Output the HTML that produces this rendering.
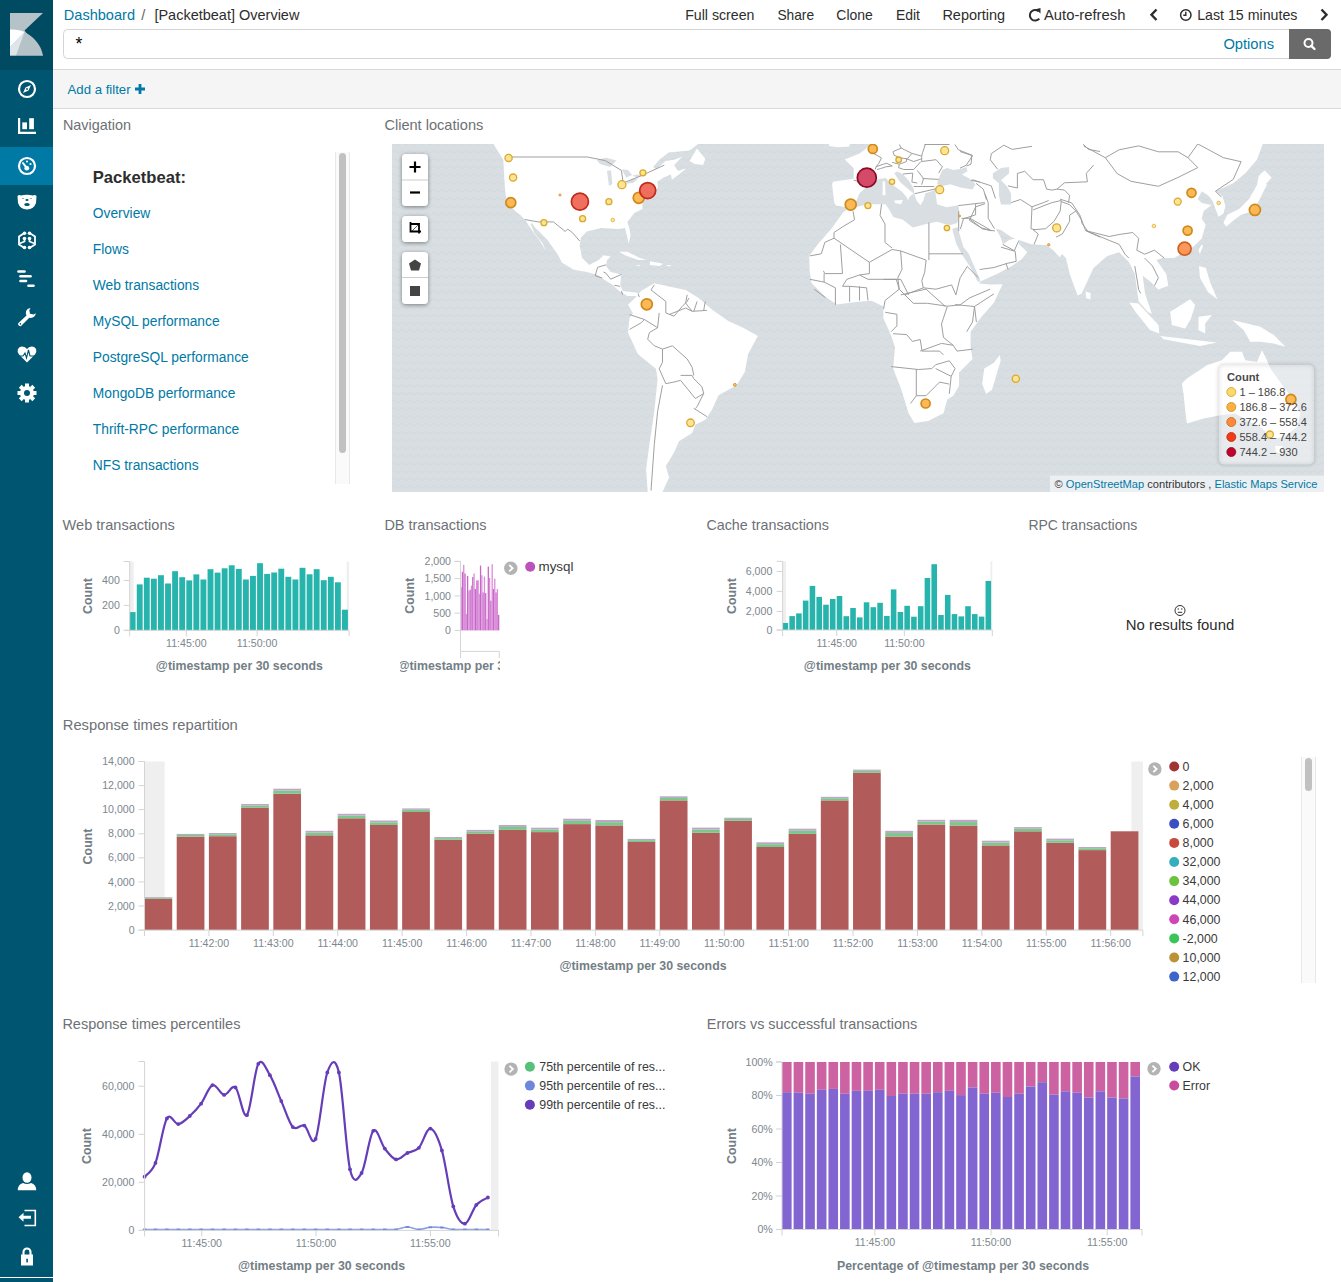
<!DOCTYPE html>
<html><head><meta charset="utf-8"><style>
html,body{margin:0;padding:0;}
body{width:1341px;height:1282px;overflow:hidden;position:relative;background:#fff;font-family:"Liberation Sans", sans-serif;}
#side{position:absolute;left:0;top:0;width:53px;height:1282px;background:#005571;}
#logo{position:absolute;left:0;top:0;width:53px;height:70px;background:#004a62;}
#sel{position:absolute;left:0;top:147px;width:53px;height:38px;background:#0079a5;}
#line{position:absolute;left:0;top:1277px;width:53px;height:1px;background:#fff;}
svg text{font-family:"Liberation Sans", sans-serif;}
</style></head><body>
<div id="side"><div id="logo"></div><div id="sel"></div><div id="line"></div>
<svg style="position:absolute;left:10px;top:13px" width="33" height="43" viewBox="0 0 33 43">
<polygon points="0,0 33,0 14.5,17.5 33,42.5 0,42.5" fill="#b5c3c9"/>
<path d="M0,16.5 C7,16.3 11.5,17.5 14.5,19 L0,34 Z" fill="#fff"/>
<path d="M14.5,19 C24,24 31,32 33,42.5 L6,42.5 Z" fill="#b5c3c9"/>
<path d="M14.5,19 L0,34 L0,42.5 L6,42.5 Z" fill="#dfe6e9"/>
</svg>
<svg style="position:absolute;left:17px;top:79px" width="20" height="20" viewBox="0 0 20 20">
<circle cx="10" cy="10" r="8" fill="none" stroke="#fff" stroke-width="2.2"/>
<path d="M14,6 L11.5,11.5 L6,14 L8.5,8.5 Z" fill="#fff"/><circle cx="10" cy="10" r="0.9" fill="#005571"/></svg>
<svg style="position:absolute;left:18px;top:118px" width="18" height="17" viewBox="0 0 18 17">
<path d="M1.1,0 V14.9 H18" fill="none" stroke="#fff" stroke-width="2.2"/>
<rect x="4.3" y="4.4" width="4.7" height="6.8" fill="#fff"/><rect x="11.2" y="0.2" width="4.7" height="11" fill="#fff"/></svg>
<svg style="position:absolute;left:17px;top:156px" width="20" height="20" viewBox="0 0 20 20">
<circle cx="10" cy="10" r="8" fill="none" stroke="#fff" stroke-width="2.2"/>
<circle cx="9.8" cy="12.2" r="2.4" fill="#fff"/><path d="M6,7 L9.8,12.2" stroke="#fff" stroke-width="2" stroke-linecap="round"/>
<circle cx="10" cy="5.5" r="1.1" fill="#fff"/><circle cx="13.5" cy="8" r="1.1" fill="#fff"/></svg>
<svg style="position:absolute;left:17px;top:194px" width="20" height="16" viewBox="0 0 20 16">
<path d="M0.5,2 Q2,0.5 4,1.5 Q10,0 16,1.5 Q18,0.5 19.5,2 L19,9 Q17,15 10,15.5 Q3,15 1,9 Z" fill="#fff"/>
<ellipse cx="10" cy="6" rx="1.6" ry="1" fill="#005571"/><ellipse cx="10" cy="10.5" rx="2.8" ry="1.5" fill="#005571"/>
<circle cx="6" cy="4.5" r="0.6" fill="#005571"/><circle cx="14" cy="4.5" r="0.6" fill="#005571"/></svg>
<svg style="position:absolute;left:17px;top:231px" width="20" height="20" viewBox="0 0 20 20">
<g fill="none" stroke="#fff" stroke-width="1.8">
<path d="M7.5,2 L2,5.5 V13.5 L7.5,17"/><path d="M12.5,2 L18,5.5 V13.5 L12.5,17"/>
<path d="M7.5,7.2 V10.5 L2.5,12.5"/><path d="M12.5,7.2 V10.5 L17.5,12.5"/></g>
<g fill="#fff"><circle cx="7.5" cy="2.3" r="1.8"/><circle cx="12.5" cy="2.3" r="1.8"/><circle cx="7.5" cy="7.5" r="1.8"/><circle cx="12.5" cy="7.5" r="1.8"/><circle cx="7.5" cy="16.5" r="1.8"/><circle cx="12.5" cy="16.5" r="1.8"/></g></svg>
<svg style="position:absolute;left:16px;top:269px" width="22" height="20" viewBox="0 0 22 20">
<g stroke="#fff" stroke-width="2.6" stroke-linecap="round">
<path d="M2.5,2.5 H8.5"/><path d="M4.5,7.3 H14.5"/><path d="M4.5,12 H10"/><path d="M12.5,16.8 H17.5"/></g></svg>
<svg style="position:absolute;left:17px;top:307px" width="20" height="20" viewBox="0 0 20 20">
<path d="M13.5,1 A5,5 0 1 0 18.8,6.2 L16.5,7.5 L13,6.8 L12.3,3.3 Z" fill="#fff"/>
<path d="M10.5,7.5 L2,15.5 A2,2 0 1 0 4.8,18.3 L13,10" fill="#fff"/><circle cx="3.4" cy="16.9" r="0.8" fill="#005571"/></svg>
<svg style="position:absolute;left:17px;top:346px" width="20" height="18" viewBox="0 0 20 18">
<path d="M10,16.5 L2,8.5 Q0,6 0.8,3.5 Q2,0.5 5.3,0.5 Q8.3,0.5 10,3 Q11.7,0.5 14.7,0.5 Q18,0.5 19.2,3.5 Q20,6 18,8.5 Z" fill="#fff"/>
<path d="M2,10 H6 L8,7 L9.5,12 L11.5,4 L13,10 H18" fill="none" stroke="#005571" stroke-width="1.1"/></svg>
<svg style="position:absolute;left:17px;top:383px" width="20" height="20" viewBox="0 0 20 20">
<g fill="#fff" transform="translate(10,10)">
<circle r="7"/>
<g><rect x="-2" y="-9.5" width="4" height="4"/><rect x="-2" y="5.5" width="4" height="4"/><rect x="-9.5" y="-2" width="4" height="4"/><rect x="5.5" y="-2" width="4" height="4"/></g>
<g transform="rotate(45)"><rect x="-2" y="-9.5" width="4" height="4"/><rect x="-2" y="5.5" width="4" height="4"/><rect x="-9.5" y="-2" width="4" height="4"/><rect x="5.5" y="-2" width="4" height="4"/></g>
</g><circle cx="10" cy="10" r="3" fill="#005571"/></svg>
<svg style="position:absolute;left:17px;top:1172px" width="20" height="19" viewBox="0 0 20 19">
<ellipse cx="10" cy="5.5" rx="4.5" ry="5.3" fill="#fff"/><path d="M0.8,18.2 Q0.8,12.5 6,11 Q10,13 14,11 Q19.2,12.5 19.2,18.2 Z" fill="#fff"/></svg>
<svg style="position:absolute;left:18px;top:1209px" width="19" height="18" viewBox="0 0 19 18">
<path d="M6.5,1.5 H17.3 V16.5 H6.5" fill="none" stroke="#fff" stroke-width="1.6"/>
<path d="M0.5,8.3 L5.5,3.8 V6.8 H13 V9.8 H5.5 V12.8 Z" fill="#fff"/></svg>
<svg style="position:absolute;left:20px;top:1247px" width="14" height="20" viewBox="0 0 14 20">
<path d="M3.5,8 V5 A3.5,3.5 0 0 1 10.5,5 V8" fill="none" stroke="#fff" stroke-width="2.1"/>
<rect x="1" y="7.5" width="12" height="11" fill="#fff"/><rect x="6.3" y="11.7" width="1.6" height="3.7" fill="#005571"/></svg>
</div>
<svg style="position:absolute;left:392px;top:144px" width="932" height="348" viewBox="392 144 932 348">
<defs><pattern id="wv" x="0" y="0" width="8" height="7.8" patternUnits="userSpaceOnUse"><path d="M0,3.5 Q2,1 4,3.5 T8,3.5" fill="none" stroke="#d1d9dc" stroke-width="0.9"/></pattern><filter id="bl"><feGaussianBlur stdDeviation="1.5"/></filter><filter id="sh" x="-30%" y="-30%" width="160%" height="160%"><feGaussianBlur in="SourceAlpha" stdDeviation="2"/><feOffset dy="1"/><feComponentTransfer><feFuncA type="linear" slope="0.45"/></feComponentTransfer><feMerge><feMergeNode/><feMergeNode in="SourceGraphic"/></feMerge></filter></defs>
<rect x="392" y="144" width="932" height="348" fill="#d8dee2"/>
<rect x="392" y="144" width="932" height="348" fill="url(#wv)"/>
<g fill="#fff"><path d="M493.4,143.9 L503.3,159.7 L504.2,175.8 L505.1,190.1 L506.8,202.6 L515.8,211.6 L520.0,214.8 L524.8,219.5 L531.9,230.3 L539.1,239.8 L545.7,250.6 L542.7,243.4 L534.3,232.7 L530.7,224.3 L531.9,223.1 L535.5,227.9 L547.4,239.8 L558.2,255.3 L561.8,262.5 L573.7,269.7 L586.8,272.0 L596.4,274.4 L603.5,279.2 L613.1,285.2 L619.0,291.1 L627.4,295.9 L636.9,295.9 L639.3,293.0 L633.4,292.3 L622.6,291.1 L620.2,284.0 L621.4,274.4 L610.7,272.0 L605.9,266.1 L607.1,260.1 L610.7,256.5 L603.5,255.3 L598.8,260.1 L589.2,264.9 L582.0,257.7 L579.7,245.8 L580.9,237.4 L586.8,231.5 L601.1,227.9 L619.0,229.1 L625.0,227.9 L627.4,237.4 L628.6,243.4 L630.5,236.0 L629.8,230.0 L627.4,222.0 L634.3,213.1 L642.3,209.0 L642.6,198.5 L646.5,191.0 L653.1,192.2 L657.9,187.6 L657.3,181.8 L663.5,177.6 L670.8,174.5 L671.9,179.7 L680.2,173.4 L686.5,168.2 L678.1,171.0 L674.0,165.1 L682.3,156.7 L674.0,159.8 L665.6,160.9 L656.2,169.2 L653.1,167.1 L659.3,159.8 L668.7,152.5 L689.6,150.4 L698.0,144.0 Z"/><path d="M636.9,295.9 L641.0,291.0 L654.3,283.3 L669.1,286.6 L685.6,289.9 L698.7,298.1 L711.9,309.6 L728.3,321.1 L743.1,327.7 L757.9,335.9 L748.1,354.0 L744.8,372.1 L736.6,385.3 L718.5,395.2 L711.9,410.0 L705.3,419.8 L695.4,424.8 L692.1,433.0 L679.0,441.2 L674.0,452.8 L665.8,465.9 L669.1,477.4 L662.5,492.0 L647.7,492.0 L646.1,469.2 L649.4,444.5 L654.3,411.6 L657.6,378.7 L655.9,368.8 L637.8,354.0 L628.0,332.6 L629.6,317.8 L632.9,312.9 L628.0,304.7 Z"/><path d="M870.1,144.0 L1262.8,144.0 L1256.9,159.7 L1245.0,173.5 L1233.2,183.3 L1215.5,191.2 L1222.4,196.1 L1225.4,205.9 L1223.4,213.8 L1218.5,216.8 L1215.5,208.9 L1212.6,201.0 L1209.6,197.1 L1207.6,195.1 L1201.7,191.2 L1197.8,199.1 L1201.7,203.0 L1211.6,205.0 L1203.7,210.9 L1201.7,218.7 L1205.7,224.6 L1201.7,238.4 L1193.9,246.3 L1174.2,258.1 L1162.4,258.1 L1156.5,260.1 L1166.3,273.9 L1168.3,285.7 L1158.4,289.6 L1150.6,281.7 L1142.7,275.8 L1145.0,293.5 L1152.0,314.0 L1148.0,312.0 L1138.7,301.4 L1134.8,273.9 L1128.9,262.0 L1119.1,252.2 L1107.2,256.1 L1093.5,268.0 L1081.7,293.5 L1077.7,295.5 L1070.0,275.0 L1065.9,258.1 L1062.0,254.0 L1059.8,257.3 L1053.0,250.0 L1046.6,245.2 L1031.4,244.2 L1019.2,240.1 L1011.1,237.1 L1001.0,230.0 L995.9,229.0 L1000.0,236.0 L1003.0,244.2 L1009.1,240.1 L1017.2,238.1 L1019.2,244.2 L1027.3,252.3 L1021.3,259.4 L1011.1,266.5 L995.9,274.6 L980.7,281.2 L979.0,283.5 L990.0,284.5 L1002.6,284.2 L993.9,302.7 L980.3,318.2 L970.6,331.7 L970.6,347.2 L972.5,358.9 L959.0,372.4 L959.0,386.0 L953.2,395.7 L947.3,399.6 L943.5,413.2 L928.0,420.9 L914.4,422.9 L908.6,413.2 L900.8,388.0 L893.1,368.6 L895.0,347.2 L891.1,335.6 L883.4,318.2 L883.4,306.5 L871.7,300.7 L858.2,301.7 L836.8,304.6 L825.2,296.8 L811.6,283.3 L809.7,271.6 L809.2,255.9 L817.6,244.4 L832.2,227.7 L842.6,213.1 L849.2,207.5 L835.8,205.6 L834.3,202.6 L832.1,184.7 L832.8,181.8 L853.7,178.8 L853.7,168.3 L844.7,159.4 L859.7,153.4 L865.6,148.9 Z"/><path d="M829.0,144.0 L850.0,144.0 L849.2,146.5 L838.0,147.2 L829.0,146.0 Z"/><path d="M619.0,251.8 L627.4,251.8 L639.3,257.7 L646.5,260.1 L638.1,260.1 L625.0,255.3 Z"/><path d="M650.0,261.3 L663.2,263.7 L659.6,266.1 L650.0,264.9 Z"/><path d="M635.7,264.9 L640.5,265.2 L639.0,266.3 Z"/><path d="M666.8,264.9 L671.5,265.2 L670.0,266.3 L667.0,266.1 Z"/><path d="M882.7,181.0 L885.0,181.5 L885.6,195.6 L882.5,195.0 Z"/><path d="M894.3,200.4 L903.0,200.0 L901.0,204.3 L895.0,203.0 Z"/><path d="M1085.6,291.6 L1090.5,293.0 L1090.5,299.4 L1086.0,298.0 Z"/><path d="M999.7,355.0 L1000.7,360.8 L991.9,389.9 L986.1,393.8 L982.2,384.1 L984.2,368.6 L993.9,362.8 Z"/><path d="M1264.7,174.4 L1266.7,185.3 L1258.8,201.0 L1252.9,210.9 L1241.1,214.8 L1233.2,220.7 L1226.3,226.6 L1223.4,222.7 L1227.3,214.8 L1239.1,208.9 L1249.0,199.1 L1256.9,185.3 L1258.8,175.4 Z"/><path d="M1259.8,174.4 L1264.7,170.5 L1271.6,177.4 L1266.7,183.3 L1260.8,180.3 Z"/><path d="M689.6,160.9 L696.9,148.4 L705.3,158.8 L703.2,165.1 L694.8,164.0 Z"/><path d="M1201.7,244.3 L1203.0,246.0 L1199.8,254.2 L1198.5,250.0 Z"/><path d="M1199.0,266.0 L1206.0,268.0 L1210.0,282.0 L1217.5,299.4 L1208.0,292.0 L1200.0,278.0 Z"/><path d="M1129.2,302.5 L1138.4,303.4 L1158.5,325.1 L1159.3,333.4 L1150.1,330.1 L1136.7,313.4 Z"/><path d="M1160.1,336.0 L1216.9,342.6 L1200.2,346.0 L1163.5,339.3 Z"/><path d="M1170.2,311.7 L1190.2,299.2 L1195.2,305.1 L1191.0,318.4 L1185.2,328.4 L1171.8,325.1 Z"/><path d="M1198.5,316.7 L1211.9,315.1 L1205.2,323.4 L1205.2,333.4 L1198.5,330.1 Z"/><path d="M1232.0,320.1 L1247.0,323.4 L1260.3,326.8 L1273.7,335.1 L1285.4,346.8 L1273.7,343.5 L1260.3,341.8 L1250.3,341.8 L1243.6,330.1 Z"/><path d="M1181.8,383.6 L1186.9,378.5 L1206.9,365.2 L1221.9,360.2 L1230.3,351.8 L1242.0,351.8 L1245.3,360.2 L1257.0,361.8 L1262.0,350.2 L1267.0,360.2 L1270.4,368.5 L1283.7,386.9 L1293.8,400.3 L1300.4,413.6 L1297.1,427.0 L1283.7,437.0 L1273.7,438.7 L1260.3,427.0 L1247.0,420.3 L1235.3,413.6 L1220.3,415.3 L1203.6,418.6 L1186.9,423.6 L1185.2,410.3 L1183.5,393.6 Z"/><path d="M1275.0,446.0 L1283.0,446.0 L1280.0,453.0 L1276.0,452.0 Z"/></g>
<g fill="#d8dee2"><path d="M852.6,208.2 L856.5,200.4 L859.4,193.6 L863.3,189.7 L872.0,182.0 L878.8,179.1 L885.6,178.1 L894.3,185.9 L902.0,191.7 L906.9,197.5 L907.9,200.4 L909.8,196.5 L913.7,193.6 L907.9,188.8 L900.1,182.0 L894.3,173.3 L897.0,171.5 L903.0,174.2 L909.8,182.0 L913.7,188.8 L914.6,194.6 L916.6,200.4 L920.5,205.3 L923.4,200.4 L925.3,193.6 L933.1,190.7 L935.0,188.8 L936.0,196.5 L937.0,204.3 L946.6,207.2 L958.3,205.3 L959.4,212.7 L957.4,222.9 L950.3,224.9 L946.6,224.6 L937.0,221.7 L927.3,223.7 L912.7,227.6 L903.0,219.8 L893.3,216.9 L889.4,210.1 L885.6,204.3 L878.8,204.3 L869.1,204.3 L859.4,206.2 Z"/><path d="M938.1,180.3 L942.2,170.1 L947.2,168.1 L953.3,170.1 L960.4,169.1 L966.5,167.1 L967.5,171.2 L962.0,174.5 L970.6,179.3 L975.6,184.3 L972.6,189.4 L960.4,187.4 L950.3,184.3 L940.1,186.4 L937.1,183.3 Z"/><path d="M992.9,173.2 L1001.0,168.1 L1009.1,167.1 L1009.1,173.2 L1001.0,180.3 L1007.1,186.4 L1011.1,193.5 L1011.1,204.6 L1001.0,204.6 L998.9,195.5 L998.9,183.3 L992.9,178.3 Z"/><path d="M952.3,229.0 L957.4,226.9 L963.5,247.2 L968.5,253.3 L975.6,269.5 L980.7,281.2 L977.7,281.7 L970.6,267.5 L962.4,255.3 L956.4,244.2 L953.3,233.0 Z"/><path d="M995.9,229.0 L995.9,229.5 Z"/><path d="M596.7,160.0 L606.0,157.7 L616.5,160.5 L610.0,167.1 L600.0,164.0 Z"/><path d="M607.0,171.0 L611.0,170.3 L612.4,184.0 L609.0,186.0 Z"/><path d="M621.8,169.2 L628.0,170.0 L632.2,175.0 L626.0,177.6 Z"/><path d="M624.9,183.8 L632.0,179.0 L638.5,178.6 L633.0,183.0 Z"/><path d="M632.2,175.5 L638.0,174.5 L642.6,175.5 L637.0,177.6 Z"/></g>
<g fill="#fff"><path d="M882.7,181.0 L885.0,181.5 L885.6,195.6 L882.5,195.0 Z"/><path d="M894.3,200.4 L903.0,200.0 L901.0,204.3 L895.0,203.0 Z"/></g>
<g fill="none" stroke="#9a9a9a" stroke-width="0.95"><path d="M853.1,211.3 L854.5,219.8 L842.5,226.8 L834.0,232.5 L834.0,238.2"/><path d="M834.0,238.2 L824.8,242.4 L821.3,253.8 L809.9,255.9"/><path d="M834.0,238.2 L869.4,262.3"/><path d="M840.4,244.5 L842.5,273.6 L824.8,273.6 L823.4,270.8"/><path d="M881.5,204.2 L880.1,215.5 L885.0,224.0 L885.0,242.4 L892.1,248.1"/><path d="M869.4,262.3 L892.1,249.5"/><path d="M892.1,249.5 L900.6,250.9 L926.1,260.1"/><path d="M928.9,222.6 L928.9,260.1"/><path d="M928.9,253.8 L962.9,253.8"/><path d="M869.4,262.3 L869.4,273.6 L859.5,275.0 L846.8,279.3 L842.5,286.3"/><path d="M900.6,250.9 L902.0,269.3 L897.8,277.8"/><path d="M859.5,275.0 L868.0,279.3 L896.3,279.3"/><path d="M926.1,260.1 L924.7,272.2 L921.8,280.7 L923.3,287.8"/><path d="M897.8,277.8 L899.2,289.2 L904.8,294.8 L923.3,287.8"/><path d="M923.3,287.8 L936.0,289.2 L951.6,284.9 L955.9,294.8"/><path d="M967.2,266.5 L960.1,277.8 L955.9,294.8"/><path d="M967.2,266.5 L978.5,277.8"/><path d="M896.3,279.3 L899.2,289.2 L885.0,300.5 L883.6,309.0"/><path d="M824.1,273.6 L824.1,282.1 L835.4,287.8 L835.4,304.8"/><path d="M849.6,286.3 L849.6,301.9"/><path d="M859.5,286.3 L859.5,300.5"/><path d="M842.5,286.3 L849.6,286.3 L866.6,287.8 L868.0,300.5"/><path d="M809.9,279.3 L824.1,282.1"/><path d="M814.2,289.2 L825.5,297.7"/><path d="M904.8,294.8 L913.3,303.3 L927.5,303.3 L947.4,306.2"/><path d="M947.4,306.2 L960.1,304.8 L970.0,297.7 L990.0,289.2"/><path d="M961.5,218.3 L970.0,218.3 L989.9,229.7"/><path d="M958.7,211.3 L958.7,231.1"/><path d="M885.3,312.3 L896.9,314.3 L896.9,325.9 L891.1,331.7"/><path d="M893.1,333.7 L906.6,334.6 L912.4,341.4 L920.2,339.5 L922.1,351.1 L939.6,351.1 L943.5,355.0"/><path d="M891.1,366.6 L918.3,369.5 L931.8,368.6"/><path d="M916.3,369.5 L916.3,395.7 L910.5,403.5"/><path d="M916.3,395.7 L926.0,395.7 L939.6,382.1 L949.3,384.1"/><path d="M920.2,351.1 L941.5,343.4 L953.2,345.3 L957.0,351.1 L972.5,349.2"/><path d="M974.5,306.5 L972.5,322.0 L966.7,331.7"/><path d="M947.3,306.5 L941.5,324.0 L943.5,337.5 L953.2,345.3"/><path d="M935.7,368.6 L951.2,376.3 L949.3,393.8"/><path d="M931.8,368.6 L935.7,364.7 L949.3,360.8 L955.1,368.6 L951.2,376.3"/><path d="M993.9,293.9 L980.3,302.7 L974.5,306.5"/><path d="M974.5,306.5 L976.4,322.0"/><path d="M955.1,304.6 L974.5,306.5"/><path d="M900.8,294.9 L926.0,289.1 L945.4,306.5"/><path d="M883.4,279.4 L900.8,279.4 L908.6,294.9"/><path d="M1083.6,145.9 L1105.3,157.7 L1119.1,149.8 L1138.7,145.9 L1158.4,151.8 L1178.1,151.8 L1188.0,157.7 L1197.8,143.9"/><path d="M1105.3,157.7 L1117.1,173.5 L1130.9,181.3 L1158.4,186.3 L1178.1,177.4 L1197.8,167.6 L1188.0,157.7"/><path d="M1197.8,143.9 L1223.4,157.7 L1241.1,161.7 L1233.2,179.4 L1215.5,191.2"/><path d="M1215.5,191.2 L1221.4,197.1"/><path d="M1060.0,199.1 L1071.8,203.0 L1079.7,214.8 L1085.6,230.6 L1109.2,236.5 L1119.1,234.5 L1132.8,232.5 L1138.7,238.4 L1136.8,250.2"/><path d="M1085.6,230.6 L1109.2,240.4 L1119.1,244.3"/><path d="M1119.1,244.3 L1125.0,254.2 L1128.9,258.1"/><path d="M1136.8,250.2 L1144.6,254.2 L1154.5,250.2 L1164.3,258.1"/><path d="M1134.8,266.0 L1138.7,289.6 L1140.7,293.5"/><path d="M1144.6,258.1 L1152.5,266.0 L1158.4,277.8 L1154.5,285.7"/><path d="M958.4,205.6 L975.6,203.6 L984.8,202.6"/><path d="M969.5,218.8 L982.7,229.0 L994.9,231.0"/><path d="M960.4,229.0 L963.5,218.8 L975.6,214.8 L975.6,203.6"/><path d="M1001.0,247.2 L1015.2,251.3 L1016.2,261.4 L1007.1,263.4 L993.9,267.5 L979.7,269.5"/><path d="M1006.0,263.4 L1008.1,269.5"/><path d="M654.3,284.9 L651.0,289.9 L665.8,301.4 L665.8,312.9 L674.0,316.2 L682.3,306.3 L687.2,301.4 L688.8,298.1"/><path d="M687.2,294.8 L685.6,303.0 L692.1,311.3"/><path d="M697.1,301.4 L693.8,311.3"/><path d="M705.3,301.4 L703.7,310.4"/><path d="M669.1,314.6 L685.6,308.0 L692.1,311.3 L706.9,310.4"/><path d="M629.6,314.6 L644.4,319.5 L657.6,327.7 L659.2,312.9"/><path d="M629.6,329.4 L641.1,322.8 L644.4,319.5"/><path d="M657.6,327.7 L649.4,332.6 L647.7,339.2 L654.3,345.8 L662.5,349.1 L672.4,345.8"/><path d="M672.4,345.8 L687.2,359.0 L692.1,367.2 L693.8,375.4"/><path d="M662.5,349.1 L662.5,362.3 L659.2,368.8"/><path d="M659.2,368.8 L665.8,383.7 L674.0,382.0 L680.6,380.4"/><path d="M680.6,375.4 L692.1,375.4 L693.8,378.7"/><path d="M680.6,380.4 L695.4,398.5 L703.7,393.5 L702.0,386.9 L693.8,378.7"/><path d="M703.7,393.5 L697.1,406.7 L695.4,408.3"/><path d="M693.8,408.3 L706.9,416.6"/><path d="M662.5,385.3 L657.6,411.6 L654.3,444.5 L651.0,490.6"/><path d="M508.6,157.0 L587.4,157.0 L605.3,160.6 L621.4,170.4 L623.2,183.0 L641.1,175.8 L664.3,165.1"/><path d="M853.7,180.3 L862.6,181.8"/><path d="M914.8,193.7 L934.2,189.2 L940.2,186.2"/><path d="M976.0,183.3 L983.4,189.2"/><path d="M983.4,189.2 L986.4,199.7"/><path d="M960.0,151.5 L972.5,155.7 L966.3,165.1 L960.0,168.2"/><path d="M991.3,153.6 L1003.8,145.2 L1012.2,149.4 L1032.0,146.3"/><path d="M991.3,153.6 L990.3,159.8 L997.6,169.2"/><path d="M1008.0,185.9 L1017.4,188.0 L1017.4,173.4 L1024.7,171.3 L1033.1,179.7 L1043.5,179.7 L1046.6,189.1 L1051.9,190.1"/><path d="M1083.2,144.2 L1088.4,149.4 L1100.0,151.5"/><path d="M1093.6,165.1 L1086.3,173.4 L1087.4,181.8 L1064.4,182.8 L1057.1,189.1"/><path d="M1011.2,202.6 L1020.5,199.5 L1032.0,206.8 L1043.5,202.6 L1048.7,200.5"/><path d="M1032.0,206.8 L1031.0,228.7 L1035.2,229.8"/><path d="M1033.1,209.9 L1051.9,202.6 L1061.3,200.5 L1060.2,211.0 L1054.0,221.4 L1045.6,228.7 L1033.1,229.8"/><path d="M1061.3,201.6 L1069.6,204.7 L1075.9,211.0 L1069.6,215.2 L1069.6,221.4 L1062.3,234.0 L1056.0,237.1"/><path d="M1075.9,211.0 L1081.1,219.3 L1082.1,223.5 L1088.4,231.9 L1100.0,237.1"/><path d="M1051.9,190.1 L1057.1,189.1 L1064.4,190.1 L1069.6,195.3 L1068.6,202.6"/><path d="M985.1,194.3 L988.2,202.6 L988.2,218.3 L994.5,228.7"/><path d="M969.4,220.4 L975.7,206.8 L985.1,203.7"/><path d="M969.4,220.4 L980.9,227.7 L991.3,230.8"/><path d="M972.5,179.7 L991.3,185.9 L995.5,198.5"/><path d="M1033.1,229.8 L1038.3,234.0 L1034.1,244.4"/><path d="M1002.8,244.4 L1014.3,250.7 L1018.5,241.3"/><path d="M873.4,153.4 L881.5,157.9 L878.8,163.3 L876.1,166.8 L875.2,169.5"/><path d="M876.1,166.8 L883.3,164.2 L886.8,163.3 L892.2,166.0 L886.0,166.8 L880.6,168.6 L877.0,169.5"/><path d="M899.4,144.5 L901.2,148.1 L893.1,151.6 L894.0,155.2 L900.3,157.9 L907.4,158.8 L911.9,153.4 L904.7,149.8 L901.2,148.1"/><path d="M892.2,162.4 L899.4,164.2 L906.5,161.5 L906.5,158.8"/><path d="M899.4,164.2 L898.5,167.7 L903.8,169.5"/><path d="M911.9,153.4 L921.7,156.1 L922.6,152.5 L925.3,144.5"/><path d="M906.5,158.8 L913.7,161.5 L921.7,158.8"/><path d="M903.8,169.5 L913.7,169.5 L920.9,161.5"/><path d="M921.7,156.1 L921.7,161.5 L936.1,159.7 L942.3,166.8 L938.7,173.1"/><path d="M922.6,178.5 L938.7,179.4"/><path d="M903.0,174.0 L912.8,173.1 L911.9,182.1 L917.3,183.0"/><path d="M917.3,170.4 L923.5,178.5 L921.7,184.7"/><path d="M913.7,186.5 L922.6,186.5 L934.3,186.5"/><path d="M924.4,144.5 L949.5,144.5"/><path d="M954.9,144.5 L958.4,149.8 L971.9,155.2 L971.0,164.2 L966.5,166.0"/><path d="M971.0,180.3 L980.0,182.1"/><path d="M524.8,219.5 L537.9,221.9 L553.4,221.9 L565.3,231.5 L567.7,229.1 L572.5,232.7 L579.7,241.0"/><path d="M605.9,264.9 L597.6,267.3 L595.2,275.6 L602.3,278.0"/><path d="M603.5,272.0 L605.9,273.2 L610.7,279.2 L621.4,274.4"/><path d="M614.3,285.2 L620.2,286.4"/><path d="M621.4,291.1 L622.6,294.7"/><path d="M638.1,293.5 L639.3,297.1"/></g>
<rect x="1219" y="365" width="95" height="99.5" rx="5" fill="none" stroke="#000" stroke-opacity="0.12" stroke-width="3" filter="url(#bl)"/>
<rect x="1219" y="365" width="95" height="99.5" rx="5" fill="#fff" fill-opacity="0.4"/>
<circle cx="508.6" cy="157.9" r="3.6" fill="#fde38a" fill-opacity="0.92" stroke="#d9a82e" stroke-width="1.3"/>
<circle cx="513.1" cy="177.6" r="3.6" fill="#fde38a" fill-opacity="0.92" stroke="#d9a82e" stroke-width="1.3"/>
<circle cx="510.8" cy="202.6" r="5" fill="#fdb347" fill-opacity="0.92" stroke="#cf8a1c" stroke-width="1.7"/>
<circle cx="560" cy="195" r="1.1" fill="#fdb347" fill-opacity="0.92" stroke="#cf8a1c" stroke-width="0.7"/>
<circle cx="579.9" cy="201.7" r="8.5" fill="#f06350" fill-opacity="0.92" stroke="#c02a1a" stroke-width="1.7"/>
<circle cx="608.9" cy="201.7" r="3" fill="#fde38a" fill-opacity="0.92" stroke="#d9a82e" stroke-width="1.3"/>
<circle cx="582.6" cy="218.7" r="3" fill="#fde38a" fill-opacity="0.92" stroke="#d9a82e" stroke-width="1.3"/>
<circle cx="612.8" cy="220" r="1.8" fill="#fde38a" fill-opacity="0.92" stroke="#d9a82e" stroke-width="0.7"/>
<circle cx="543.9" cy="222.7" r="3" fill="#fde38a" fill-opacity="0.92" stroke="#d9a82e" stroke-width="1.3"/>
<circle cx="621.9" cy="184.7" r="4" fill="#fde38a" fill-opacity="0.92" stroke="#d9a82e" stroke-width="1.3"/>
<circle cx="642.9" cy="172.8" r="3" fill="#fde38a" fill-opacity="0.92" stroke="#d9a82e" stroke-width="1.3"/>
<circle cx="638.7" cy="197.8" r="5.5" fill="#fdb347" fill-opacity="0.92" stroke="#cf8a1c" stroke-width="1.7"/>
<circle cx="647.7" cy="190.6" r="8" fill="#f06350" fill-opacity="0.92" stroke="#c02a1a" stroke-width="1.7"/>
<circle cx="646.8" cy="304.3" r="5.5" fill="#fdb347" fill-opacity="0.92" stroke="#cf8a1c" stroke-width="1.7"/>
<circle cx="734.9" cy="384.8" r="1.5" fill="#fdb347" fill-opacity="0.92" stroke="#cf8a1c" stroke-width="0.7"/>
<circle cx="690.5" cy="422.8" r="3.8" fill="#fde38a" fill-opacity="0.92" stroke="#d9a82e" stroke-width="1.3"/>
<circle cx="872.8" cy="148.9" r="4.5" fill="#fdb347" fill-opacity="0.92" stroke="#cf8a1c" stroke-width="1.7"/>
<circle cx="898.7" cy="159.8" r="2.8" fill="#fde38a" fill-opacity="0.92" stroke="#d9a82e" stroke-width="1.3"/>
<circle cx="892" cy="181.8" r="2.6" fill="#fde38a" fill-opacity="0.92" stroke="#d9a82e" stroke-width="1.3"/>
<circle cx="944.7" cy="150.7" r="4" fill="#fde38a" fill-opacity="0.92" stroke="#d9a82e" stroke-width="1.3"/>
<circle cx="939.7" cy="189.7" r="4" fill="#fde38a" fill-opacity="0.92" stroke="#d9a82e" stroke-width="1.3"/>
<circle cx="850.7" cy="204.6" r="5.5" fill="#fdb347" fill-opacity="0.92" stroke="#cf8a1c" stroke-width="1.7"/>
<circle cx="867.9" cy="205.6" r="3" fill="#fde38a" fill-opacity="0.92" stroke="#d9a82e" stroke-width="1.3"/>
<circle cx="946.9" cy="228" r="2.7" fill="#fde38a" fill-opacity="0.92" stroke="#d9a82e" stroke-width="1.3"/>
<circle cx="959.6" cy="216" r="1" fill="#fdb347" fill-opacity="0.92" stroke="#cf8a1c" stroke-width="0.7"/>
<circle cx="925.6" cy="403.5" r="4.5" fill="#fdb347" fill-opacity="0.92" stroke="#cf8a1c" stroke-width="1.7"/>
<circle cx="1015.8" cy="378.7" r="3.6" fill="#fde38a" fill-opacity="0.92" stroke="#d9a82e" stroke-width="1.3"/>
<circle cx="1191.5" cy="192.8" r="4.5" fill="#fdb347" fill-opacity="0.92" stroke="#cf8a1c" stroke-width="1.7"/>
<circle cx="1177.7" cy="201.6" r="3.5" fill="#fde38a" fill-opacity="0.92" stroke="#d9a82e" stroke-width="1.3"/>
<circle cx="1153.9" cy="226" r="1.8" fill="#fde38a" fill-opacity="0.92" stroke="#d9a82e" stroke-width="0.7"/>
<circle cx="1187.6" cy="230.6" r="4.5" fill="#fdb347" fill-opacity="0.92" stroke="#cf8a1c" stroke-width="1.7"/>
<circle cx="1184.6" cy="248.7" r="6.5" fill="#fd8f4f" fill-opacity="0.92" stroke="#d0621f" stroke-width="1.7"/>
<circle cx="1218.7" cy="203" r="1.8" fill="#fde38a" fill-opacity="0.92" stroke="#d9a82e" stroke-width="0.7"/>
<circle cx="1254.9" cy="209.9" r="5.5" fill="#fdb347" fill-opacity="0.92" stroke="#cf8a1c" stroke-width="1.7"/>
<circle cx="1056.7" cy="227.9" r="4" fill="#fde38a" fill-opacity="0.92" stroke="#d9a82e" stroke-width="1.3"/>
<circle cx="1048.7" cy="244.8" r="1.2" fill="#fdb347" fill-opacity="0.92" stroke="#cf8a1c" stroke-width="0.7"/>
<circle cx="1290.9" cy="399.4" r="5" fill="#fdb347" fill-opacity="0.92" stroke="#cf8a1c" stroke-width="1.7"/>
<circle cx="1269.9" cy="434.5" r="3.5" fill="#fde38a" fill-opacity="0.92" stroke="#d9a82e" stroke-width="1.3"/>
<circle cx="866.8" cy="177.7" r="9.5" fill="#d23b5c" fill-opacity="0.92" stroke="#8c0b22" stroke-width="1.7"/>
<g filter="url(#sh)"><rect x="402" y="154" width="26" height="52" rx="4" fill="#fff"/><rect x="402" y="216" width="26" height="26" rx="4" fill="#fff"/><rect x="402" y="252" width="26" height="52" rx="4" fill="#fff"/></g>
<path d="M402,180 H428 M402,277.5 H428" stroke="#ccc" stroke-width="1"/>
<path d="M415,161.5 V172.5 M409.5,167 H420.5" stroke="#000" stroke-width="2.2"/>
<path d="M410,192.5 H420" stroke="#000" stroke-width="2.2"/>
<path d="M410.5,224 H419 V233.5 M410.5,222 V231.5 H421" fill="none" stroke="#000" stroke-width="1.8"/><path d="M412,231 L420,223" stroke="#000" stroke-width="0.6"/>
<path d="M415,259.5 L421,263.5 L419,270.5 L411,270.5 L409,263.5 Z" fill="#444"/>
<rect x="410" y="286" width="10" height="10" fill="#444"/>
<text x="1227" y="381" font-size="11.2" font-weight="bold" fill="#4a4a4a">Count</text>
<circle cx="1231.3" cy="392" r="4.5" fill="#fdd86a" stroke="#cf9f2a" stroke-width="0.8"/>
<text x="1239.5" y="396" font-size="11" fill="#444">1 – 186.8</text>
<circle cx="1231.3" cy="407" r="4.5" fill="#fdb13e" stroke="#c98a1f" stroke-width="0.8"/>
<text x="1239.5" y="411" font-size="11" fill="#444">186.8 – 372.6</text>
<circle cx="1231.3" cy="422" r="4.5" fill="#fd8a3a" stroke="#c9621c" stroke-width="0.8"/>
<text x="1239.5" y="426" font-size="11" fill="#444">372.6 – 558.4</text>
<circle cx="1231.3" cy="437" r="4.5" fill="#f03c17" stroke="#c02a10" stroke-width="0.8"/>
<text x="1239.5" y="441" font-size="11" fill="#444">558.4 – 744.2</text>
<circle cx="1231.3" cy="452" r="4.5" fill="#c0052b" stroke="#8f0a20" stroke-width="0.8"/>
<text x="1239.5" y="456" font-size="11" fill="#444">744.2 – 930</text>
<rect x="1050" y="475.6" width="274" height="16.4" fill="#fff" fill-opacity="0.55"/>
<text x="1054.6" y="487.6" font-size="11.1" fill="#333">© <tspan fill="#0079a5">OpenStreetMap</tspan> contributors , <tspan fill="#0079a5">Elastic Maps Service</tspan></text>
</svg>
<svg style="position:absolute;left:0;top:0" width="1341" height="1282" viewBox="0 0 1341 1282">
<text x="63.8" y="20.2" font-size="14.6" fill="#0079a5" text-anchor="start" textLength="71.2" lengthAdjust="spacingAndGlyphs">Dashboard</text>
<text x="141.2" y="20.2" font-size="14.6" fill="#666" text-anchor="start" >/</text>
<text x="154.4" y="20.2" font-size="14.6" fill="#2d2d2d" text-anchor="start" textLength="145" lengthAdjust="spacingAndGlyphs">[Packetbeat] Overview</text>
<text x="685.2" y="20.3" font-size="14.1" fill="#2d2d2d" text-anchor="start" textLength="69.3" lengthAdjust="spacingAndGlyphs">Full screen</text>
<text x="777.4" y="20.3" font-size="14.1" fill="#2d2d2d" text-anchor="start" textLength="36.7" lengthAdjust="spacingAndGlyphs">Share</text>
<text x="836.3" y="20.3" font-size="14.1" fill="#2d2d2d" text-anchor="start" textLength="36.5" lengthAdjust="spacingAndGlyphs">Clone</text>
<text x="896" y="20.3" font-size="14.1" fill="#2d2d2d" text-anchor="start" textLength="24" lengthAdjust="spacingAndGlyphs">Edit</text>
<text x="942.4" y="20.3" font-size="14.1" fill="#2d2d2d" text-anchor="start" textLength="62.8" lengthAdjust="spacingAndGlyphs">Reporting</text>
<text x="1044" y="20.3" font-size="14.1" fill="#2d2d2d" text-anchor="start" textLength="81.4" lengthAdjust="spacingAndGlyphs">Auto-refresh</text>
<text x="1197.2" y="20.3" font-size="14.1" fill="#2d2d2d" text-anchor="start" textLength="100.2" lengthAdjust="spacingAndGlyphs">Last 15 minutes</text>
<path d="M1038.5,11.2 A5.3,5.3 0 1 0 1039.3,18.6" fill="none" stroke="#2d2d2d" stroke-width="2"/><path d="M1035.5,9.2 L1040.5,8 L1040.5,13.5 Z" fill="#2d2d2d"/>
<path d="M1156.5,9.5 L1151.5,14.8 L1156.5,20" fill="none" stroke="#2d2d2d" stroke-width="2.4"/>
<path d="M1321.5,9.5 L1326.5,14.8 L1321.5,20" fill="none" stroke="#2d2d2d" stroke-width="2.4"/>
<circle cx="1185.8" cy="15" r="5.2" fill="none" stroke="#2d2d2d" stroke-width="1.5"/><path d="M1185.8,11.8 V15.3 H1183.3" fill="none" stroke="#2d2d2d" stroke-width="1.4"/>
<path d="M1289,29.5 H67.5 Q63.5,29.5 63.5,33.5 V54.5 Q63.5,58.5 67.5,58.5 H1289" fill="#fff" stroke="#d4d4d4" stroke-width="1"/>
<path d="M1289,29 H1327 Q1331,29 1331,33 V55 Q1331,59 1327,59 H1289 Z" fill="#6a6a6a"/>
<circle cx="1308.5" cy="43" r="4" fill="none" stroke="#fff" stroke-width="2"/><path d="M1311.3,45.8 L1314.5,49" stroke="#fff" stroke-width="2.4" stroke-linecap="round"/>
<text x="75.6" y="49.5" font-size="17.5" fill="#000" text-anchor="start" >*</text>
<text x="1223.4" y="48.9" font-size="14.1" fill="#0079a5" text-anchor="start" textLength="50.7" lengthAdjust="spacingAndGlyphs">Options</text>
<rect x="53" y="69.5" width="1288" height="39" fill="#f5f5f5"/><path d="M53,69.5 H1341 M53,108.5 H1341" stroke="#d9d9d9" stroke-width="1"/>
<text x="67.5" y="93.8" font-size="13.2" fill="#0079a5" text-anchor="start" >Add a filter</text>
<path d="M140,84 V94 M135,89 H145" stroke="#0079a5" stroke-width="2.8"/>
<text x="62.9" y="129.9" font-size="14.6" fill="#6d7175" text-anchor="start" textLength="68.1" lengthAdjust="spacingAndGlyphs">Navigation</text>
<text x="384.4" y="129.9" font-size="14.6" fill="#6d7175" text-anchor="start" textLength="98.9" lengthAdjust="spacingAndGlyphs">Client locations</text>
<text x="62.6" y="529.5" font-size="14.6" fill="#6d7175" text-anchor="start" textLength="112.2" lengthAdjust="spacingAndGlyphs">Web transactions</text>
<text x="384.4" y="529.5" font-size="14.6" fill="#6d7175" text-anchor="start" textLength="102.2" lengthAdjust="spacingAndGlyphs">DB transactions</text>
<text x="706.4" y="529.5" font-size="14.6" fill="#6d7175" text-anchor="start" textLength="122.5" lengthAdjust="spacingAndGlyphs">Cache transactions</text>
<text x="1028.4" y="529.5" font-size="14.6" fill="#6d7175" text-anchor="start" textLength="108.9" lengthAdjust="spacingAndGlyphs">RPC transactions</text>
<text x="62.8" y="729.8" font-size="14.6" fill="#6d7175" text-anchor="start" textLength="175" lengthAdjust="spacingAndGlyphs">Response times repartition</text>
<text x="62.4" y="1029.2" font-size="14.6" fill="#6d7175" text-anchor="start" textLength="178" lengthAdjust="spacingAndGlyphs">Response times percentiles</text>
<text x="706.8" y="1029.2" font-size="14.6" fill="#6d7175" text-anchor="start" textLength="210.3" lengthAdjust="spacingAndGlyphs">Errors vs successful transactions</text>
<text x="92.8" y="183.1" font-size="16.6" fill="#2d2d2d" text-anchor="start" font-weight="bold" >Packetbeat:</text>
<text x="92.8" y="218" font-size="13.8" fill="#0079a5" text-anchor="start" >Overview</text>
<text x="92.8" y="254" font-size="13.8" fill="#0079a5" text-anchor="start" >Flows</text>
<text x="92.8" y="290" font-size="13.8" fill="#0079a5" text-anchor="start" >Web transactions</text>
<text x="92.8" y="326" font-size="13.8" fill="#0079a5" text-anchor="start" >MySQL performance</text>
<text x="92.8" y="362" font-size="13.8" fill="#0079a5" text-anchor="start" >PostgreSQL performance</text>
<text x="92.8" y="398" font-size="13.8" fill="#0079a5" text-anchor="start" >MongoDB performance</text>
<text x="92.8" y="434" font-size="13.8" fill="#0079a5" text-anchor="start" >Thrift-RPC performance</text>
<text x="92.8" y="470" font-size="13.8" fill="#0079a5" text-anchor="start" >NFS transactions</text>
<rect x="335.5" y="152" width="14" height="332" fill="#fafafa"/><path d="M335.5,152 V484 M349.5,152 V484" stroke="#e8e8e8" stroke-width="1"/>
<rect x="339" y="153" width="7" height="300" rx="3.5" fill="#c1c1c1"/>
<text x="1180" y="629.7" font-size="14.9" fill="#2d2d2d" text-anchor="middle" >No results found</text>
<circle cx="1180" cy="610.5" r="5" fill="none" stroke="#2d2d2d" stroke-width="1"/><circle cx="1178.2" cy="609" r="0.7" fill="#2d2d2d"/><circle cx="1181.8" cy="609" r="0.7" fill="#2d2d2d"/><path d="M1177.8,612.3 H1182.2" stroke="#2d2d2d" stroke-width="1"/>
<rect x="129.7" y="561.5" width="4" height="68.79999999999995" fill="#efefef"/>
<rect x="346.6" y="561.5" width="2.5" height="68.79999999999995" fill="#efefef"/>
<rect x="129.70" y="612.10" width="5.88" height="18.20" fill="#26b4ad"/>
<rect x="136.78" y="584.40" width="5.88" height="45.90" fill="#26b4ad"/>
<rect x="143.85" y="577.70" width="5.88" height="52.60" fill="#26b4ad"/>
<rect x="150.93" y="578.70" width="5.88" height="51.60" fill="#26b4ad"/>
<rect x="158.01" y="575.20" width="5.88" height="55.10" fill="#26b4ad"/>
<rect x="165.09" y="583.50" width="5.88" height="46.80" fill="#26b4ad"/>
<rect x="172.16" y="571.20" width="5.88" height="59.10" fill="#26b4ad"/>
<rect x="179.24" y="577.20" width="5.88" height="53.10" fill="#26b4ad"/>
<rect x="186.32" y="580.40" width="5.88" height="49.90" fill="#26b4ad"/>
<rect x="193.40" y="574.40" width="5.88" height="55.90" fill="#26b4ad"/>
<rect x="200.47" y="579.50" width="5.88" height="50.80" fill="#26b4ad"/>
<rect x="207.55" y="569.20" width="5.88" height="61.10" fill="#26b4ad"/>
<rect x="214.63" y="572.60" width="5.88" height="57.70" fill="#26b4ad"/>
<rect x="221.71" y="568.30" width="5.88" height="62.00" fill="#26b4ad"/>
<rect x="228.78" y="565.30" width="5.88" height="65.00" fill="#26b4ad"/>
<rect x="235.86" y="568.90" width="5.88" height="61.40" fill="#26b4ad"/>
<rect x="242.94" y="579.50" width="5.88" height="50.80" fill="#26b4ad"/>
<rect x="250.02" y="575.90" width="5.88" height="54.40" fill="#26b4ad"/>
<rect x="257.09" y="563.20" width="5.88" height="67.10" fill="#26b4ad"/>
<rect x="264.17" y="573.90" width="5.88" height="56.40" fill="#26b4ad"/>
<rect x="271.25" y="572.50" width="5.88" height="57.80" fill="#26b4ad"/>
<rect x="278.33" y="568.70" width="5.88" height="61.60" fill="#26b4ad"/>
<rect x="285.40" y="576.80" width="5.88" height="53.50" fill="#26b4ad"/>
<rect x="292.48" y="579.50" width="5.88" height="50.80" fill="#26b4ad"/>
<rect x="299.56" y="567.80" width="5.88" height="62.50" fill="#26b4ad"/>
<rect x="306.64" y="574.30" width="5.88" height="56.00" fill="#26b4ad"/>
<rect x="313.71" y="569.20" width="5.88" height="61.10" fill="#26b4ad"/>
<rect x="320.79" y="580.20" width="5.88" height="50.10" fill="#26b4ad"/>
<rect x="327.87" y="576.80" width="5.88" height="53.50" fill="#26b4ad"/>
<rect x="334.95" y="582.30" width="5.88" height="48.00" fill="#26b4ad"/>
<rect x="342.02" y="609.70" width="5.88" height="20.60" fill="#26b4ad"/>
<path d="M123.69999999999999,561.5 H129.7 V630.3 H123.69999999999999" fill="none" stroke="#d4d4d4" stroke-width="1"/>
<path d="M123.69999999999999,630.3 H129.7" stroke="#d4d4d4" stroke-width="1"/>
<text x="119.8" y="633.9" font-size="10.6" fill="#7d878e" text-anchor="end" >0</text>
<path d="M123.69999999999999,605.4 H129.7" stroke="#d4d4d4" stroke-width="1"/>
<text x="119.8" y="609.0" font-size="10.6" fill="#7d878e" text-anchor="end" >200</text>
<path d="M123.69999999999999,580.5 H129.7" stroke="#d4d4d4" stroke-width="1"/>
<text x="119.8" y="584.1" font-size="10.6" fill="#7d878e" text-anchor="end" >400</text>
<path d="M129.7,636.3 V630.3 H349.1 V636.3" fill="none" stroke="#d4d4d4" stroke-width="1"/>
<path d="M186.31935483870967,630.3 V636.3" stroke="#d4d4d4" stroke-width="1"/>
<text x="186.31935483870967" y="646.8" font-size="10.6" fill="#7d878e" text-anchor="middle" >11:45:00</text>
<path d="M257.0935483870968,630.3 V636.3" stroke="#d4d4d4" stroke-width="1"/>
<text x="257.0935483870968" y="646.8" font-size="10.6" fill="#7d878e" text-anchor="middle" >11:50:00</text>
<text x="91.9" y="596" font-size="12.4" font-weight="bold" fill="#737e85" text-anchor="middle" transform="rotate(-90 91.9 596)">Count</text>
<text x="239.4" y="670.1" font-size="12.35" fill="#737e85" text-anchor="middle" font-weight="bold" >@timestamp per 30 seconds</text>
<rect x="460.50" y="587.27" width="1.29" height="43.13" fill="#d98dd9"/>
<rect x="461.79" y="571.75" width="1.29" height="58.65" fill="#c966c9"/>
<rect x="463.09" y="564.85" width="1.29" height="65.55" fill="#d98dd9"/>
<rect x="464.38" y="573.48" width="1.29" height="56.93" fill="#c966c9"/>
<rect x="465.67" y="613.84" width="1.29" height="16.56" fill="#d98dd9"/>
<rect x="466.97" y="575.89" width="1.29" height="54.51" fill="#c966c9"/>
<rect x="468.26" y="590.73" width="1.29" height="39.68" fill="#d98dd9"/>
<rect x="469.55" y="589.69" width="1.29" height="40.71" fill="#c966c9"/>
<rect x="470.85" y="585.55" width="1.29" height="44.85" fill="#d98dd9"/>
<rect x="472.14" y="576.92" width="1.29" height="53.48" fill="#c966c9"/>
<rect x="473.43" y="573.48" width="1.29" height="56.93" fill="#d98dd9"/>
<rect x="474.73" y="589.00" width="1.29" height="41.40" fill="#c966c9"/>
<rect x="476.02" y="580.38" width="1.29" height="50.03" fill="#d98dd9"/>
<rect x="477.31" y="580.38" width="1.29" height="50.03" fill="#c966c9"/>
<rect x="478.61" y="593.83" width="1.29" height="36.57" fill="#d98dd9"/>
<rect x="479.90" y="565.54" width="1.29" height="64.86" fill="#c966c9"/>
<rect x="481.19" y="575.20" width="1.29" height="55.20" fill="#d98dd9"/>
<rect x="482.49" y="592.45" width="1.29" height="37.95" fill="#c966c9"/>
<rect x="483.78" y="576.58" width="1.29" height="53.82" fill="#d98dd9"/>
<rect x="485.07" y="593.14" width="1.29" height="37.26" fill="#c966c9"/>
<rect x="486.37" y="619.01" width="1.29" height="11.39" fill="#d98dd9"/>
<rect x="487.66" y="566.57" width="1.29" height="63.83" fill="#c966c9"/>
<rect x="488.95" y="577.96" width="1.29" height="52.44" fill="#d98dd9"/>
<rect x="490.25" y="600.73" width="1.29" height="29.67" fill="#c966c9"/>
<rect x="491.54" y="564.16" width="1.29" height="66.24" fill="#d98dd9"/>
<rect x="492.83" y="589.00" width="1.29" height="41.40" fill="#c966c9"/>
<rect x="494.13" y="578.65" width="1.29" height="51.75" fill="#d98dd9"/>
<rect x="495.42" y="592.45" width="1.29" height="37.95" fill="#c966c9"/>
<rect x="496.71" y="589.00" width="1.29" height="41.40" fill="#d98dd9"/>
<rect x="498.01" y="614.88" width="1.29" height="15.53" fill="#c966c9"/>
<path d="M454.5,561.4 H460.5 V651.4" fill="none" stroke="#d4d4d4" stroke-width="1"/>
<path d="M454.5,630.40 H460.5" stroke="#d4d4d4" stroke-width="1"/>
<text x="451" y="634.0" font-size="10.6" fill="#7d878e" text-anchor="end" >0</text>
<path d="M454.5,613.15 H460.5" stroke="#d4d4d4" stroke-width="1"/>
<text x="451" y="616.75" font-size="10.6" fill="#7d878e" text-anchor="end" >500</text>
<path d="M454.5,595.90 H460.5" stroke="#d4d4d4" stroke-width="1"/>
<text x="451" y="599.5" font-size="10.6" fill="#7d878e" text-anchor="end" >1,000</text>
<path d="M454.5,578.65 H460.5" stroke="#d4d4d4" stroke-width="1"/>
<text x="451" y="582.25" font-size="10.6" fill="#7d878e" text-anchor="end" >1,500</text>
<path d="M454.5,561.40 H460.5" stroke="#d4d4d4" stroke-width="1"/>
<text x="451" y="565.0" font-size="10.6" fill="#7d878e" text-anchor="end" >2,000</text>
<path d="M460.5,658 V651.4 H499.3 V658" fill="none" stroke="#d4d4d4" stroke-width="1"/>
<text x="413.8" y="595.8" font-size="12.4" font-weight="bold" fill="#737e85" text-anchor="middle" transform="rotate(-90 413.8 595.8)">Count</text>
<svg x="400" y="650" width="100" height="30" viewBox="400 650 100 30" overflow="hidden"><text x="481" y="670.1" font-size="12.35" fill="#737e85" text-anchor="middle" font-weight="bold" >@timestamp per 30 seconds</text></svg>
<circle cx="510.8" cy="568.2" r="6.7" fill="#b3b3b3"/><path d="M509.2,565.0 L512.6,568.2 L509.2,571.4000000000001" fill="none" stroke="#fff" stroke-width="1.8"/>
<circle cx="530.2" cy="566.8" r="5" fill="#bc52bc"/>
<text x="538.5" y="571.0" font-size="13.4" fill="#3a3a3a" text-anchor="start" >mysql</text>
<rect x="782.6" y="561.3" width="3.5" height="68.70000000000005" fill="#efefef"/>
<rect x="990.3" y="561.3" width="2" height="68.70000000000005" fill="#efefef"/>
<rect x="782.60" y="623.00" width="5.56" height="7.00" fill="#26b4ad"/>
<rect x="789.36" y="616.10" width="5.56" height="13.90" fill="#26b4ad"/>
<rect x="796.13" y="613.40" width="5.56" height="16.60" fill="#26b4ad"/>
<rect x="802.89" y="600.60" width="5.56" height="29.40" fill="#26b4ad"/>
<rect x="809.66" y="585.90" width="5.56" height="44.10" fill="#26b4ad"/>
<rect x="816.42" y="596.90" width="5.56" height="33.10" fill="#26b4ad"/>
<rect x="823.19" y="604.70" width="5.56" height="25.30" fill="#26b4ad"/>
<rect x="829.95" y="599.00" width="5.56" height="31.00" fill="#26b4ad"/>
<rect x="836.72" y="596.00" width="5.56" height="34.00" fill="#26b4ad"/>
<rect x="843.48" y="616.20" width="5.56" height="13.80" fill="#26b4ad"/>
<rect x="850.25" y="608.00" width="5.56" height="22.00" fill="#26b4ad"/>
<rect x="857.01" y="617.40" width="5.56" height="12.60" fill="#26b4ad"/>
<rect x="863.77" y="602.30" width="5.56" height="27.70" fill="#26b4ad"/>
<rect x="870.54" y="607.20" width="5.56" height="22.80" fill="#26b4ad"/>
<rect x="877.30" y="602.80" width="5.56" height="27.20" fill="#26b4ad"/>
<rect x="884.07" y="615.90" width="5.56" height="14.10" fill="#26b4ad"/>
<rect x="890.83" y="589.40" width="5.56" height="40.60" fill="#26b4ad"/>
<rect x="897.60" y="612.00" width="5.56" height="18.00" fill="#26b4ad"/>
<rect x="904.36" y="605.80" width="5.56" height="24.20" fill="#26b4ad"/>
<rect x="911.13" y="616.70" width="5.56" height="13.30" fill="#26b4ad"/>
<rect x="917.89" y="606.20" width="5.56" height="23.80" fill="#26b4ad"/>
<rect x="924.65" y="578.00" width="5.56" height="52.00" fill="#26b4ad"/>
<rect x="931.42" y="564.20" width="5.56" height="65.80" fill="#26b4ad"/>
<rect x="938.18" y="615.00" width="5.56" height="15.00" fill="#26b4ad"/>
<rect x="944.95" y="594.90" width="5.56" height="35.10" fill="#26b4ad"/>
<rect x="951.71" y="614.10" width="5.56" height="15.90" fill="#26b4ad"/>
<rect x="958.48" y="616.40" width="5.56" height="13.60" fill="#26b4ad"/>
<rect x="965.24" y="606.20" width="5.56" height="23.80" fill="#26b4ad"/>
<rect x="972.01" y="614.10" width="5.56" height="15.90" fill="#26b4ad"/>
<rect x="978.77" y="616.60" width="5.56" height="13.40" fill="#26b4ad"/>
<rect x="985.54" y="581.00" width="5.56" height="49.00" fill="#26b4ad"/>
<path d="M776.6,561.3 H782.6 V630 H776.6" fill="none" stroke="#d4d4d4" stroke-width="1"/>
<path d="M776.6,630 H782.6" stroke="#d4d4d4" stroke-width="1"/>
<text x="772.3" y="633.6" font-size="10.6" fill="#7d878e" text-anchor="end" >0</text>
<path d="M776.6,611.4 H782.6" stroke="#d4d4d4" stroke-width="1"/>
<text x="772.3" y="615.0" font-size="10.6" fill="#7d878e" text-anchor="end" >2,000</text>
<path d="M776.6,591.4 H782.6" stroke="#d4d4d4" stroke-width="1"/>
<text x="772.3" y="595.0" font-size="10.6" fill="#7d878e" text-anchor="end" >4,000</text>
<path d="M776.6,571.4 H782.6" stroke="#d4d4d4" stroke-width="1"/>
<text x="772.3" y="575.0" font-size="10.6" fill="#7d878e" text-anchor="end" >6,000</text>
<path d="M782.6,636 V630 H992.3 V636" fill="none" stroke="#d4d4d4" stroke-width="1"/>
<path d="M836.7161290322581,630 V636" stroke="#d4d4d4" stroke-width="1"/>
<text x="836.7161290322581" y="646.5" font-size="10.6" fill="#7d878e" text-anchor="middle" >11:45:00</text>
<path d="M904.3612903225807,630 V636" stroke="#d4d4d4" stroke-width="1"/>
<text x="904.3612903225807" y="646.5" font-size="10.6" fill="#7d878e" text-anchor="middle" >11:50:00</text>
<text x="736.1" y="596" font-size="12.4" font-weight="bold" fill="#737e85" text-anchor="middle" transform="rotate(-90 736.1 596)">Count</text>
<text x="887.4" y="670.1" font-size="12.35" fill="#737e85" text-anchor="middle" font-weight="bold" >@timestamp per 30 seconds</text>
<rect x="144.5" y="761.5" width="20.1" height="168.60000000000002" fill="#efefef"/>
<rect x="1131.4" y="761.5" width="11.5" height="168.60000000000002" fill="#efefef"/>
<rect x="144.50" y="898.80" width="27.71" height="31.30" fill="#b15b5a"/>
<rect x="144.50" y="897.72" width="27.71" height="1.08" fill="#78c98a"/>
<rect x="144.50" y="897.00" width="27.71" height="0.72" fill="#bca8c4"/>
<rect x="176.71" y="836.60" width="27.71" height="93.50" fill="#b15b5a"/>
<rect x="176.71" y="834.98" width="27.71" height="1.62" fill="#78c98a"/>
<rect x="176.71" y="833.90" width="27.71" height="1.08" fill="#bca8c4"/>
<rect x="208.91" y="836.20" width="27.71" height="93.90" fill="#b15b5a"/>
<rect x="208.91" y="834.28" width="27.71" height="1.92" fill="#78c98a"/>
<rect x="208.91" y="833.00" width="27.71" height="1.28" fill="#bca8c4"/>
<rect x="241.12" y="807.50" width="27.71" height="122.60" fill="#b15b5a"/>
<rect x="241.12" y="805.40" width="27.71" height="2.10" fill="#78c98a"/>
<rect x="241.12" y="804.00" width="27.71" height="1.40" fill="#bca8c4"/>
<rect x="273.33" y="793.70" width="27.71" height="136.40" fill="#b15b5a"/>
<rect x="273.33" y="790.70" width="27.71" height="3.00" fill="#78c98a"/>
<rect x="273.33" y="788.70" width="27.71" height="2.00" fill="#bca8c4"/>
<rect x="305.53" y="835.30" width="27.71" height="94.80" fill="#b15b5a"/>
<rect x="305.53" y="832.60" width="27.71" height="2.70" fill="#78c98a"/>
<rect x="305.53" y="830.80" width="27.71" height="1.80" fill="#bca8c4"/>
<rect x="337.74" y="818.30" width="27.71" height="111.80" fill="#b15b5a"/>
<rect x="337.74" y="815.60" width="27.71" height="2.70" fill="#78c98a"/>
<rect x="337.74" y="813.80" width="27.71" height="1.80" fill="#bca8c4"/>
<rect x="369.95" y="825.00" width="27.71" height="105.10" fill="#b15b5a"/>
<rect x="369.95" y="822.30" width="27.71" height="2.70" fill="#78c98a"/>
<rect x="369.95" y="820.50" width="27.71" height="1.80" fill="#bca8c4"/>
<rect x="402.15" y="812.00" width="27.71" height="118.10" fill="#b15b5a"/>
<rect x="402.15" y="809.84" width="27.71" height="2.16" fill="#78c98a"/>
<rect x="402.15" y="808.40" width="27.71" height="1.44" fill="#bca8c4"/>
<rect x="434.36" y="839.80" width="27.71" height="90.30" fill="#b15b5a"/>
<rect x="434.36" y="838.12" width="27.71" height="1.68" fill="#78c98a"/>
<rect x="434.36" y="837.00" width="27.71" height="1.12" fill="#bca8c4"/>
<rect x="466.56" y="833.50" width="27.71" height="96.60" fill="#b15b5a"/>
<rect x="466.56" y="831.34" width="27.71" height="2.16" fill="#78c98a"/>
<rect x="466.56" y="829.90" width="27.71" height="1.44" fill="#bca8c4"/>
<rect x="498.77" y="829.90" width="27.71" height="100.20" fill="#b15b5a"/>
<rect x="498.77" y="826.96" width="27.71" height="2.94" fill="#78c98a"/>
<rect x="498.77" y="825.00" width="27.71" height="1.96" fill="#bca8c4"/>
<rect x="530.98" y="832.10" width="27.71" height="98.00" fill="#b15b5a"/>
<rect x="530.98" y="829.46" width="27.71" height="2.64" fill="#78c98a"/>
<rect x="530.98" y="827.70" width="27.71" height="1.76" fill="#bca8c4"/>
<rect x="563.18" y="824.10" width="27.71" height="106.00" fill="#b15b5a"/>
<rect x="563.18" y="820.86" width="27.71" height="3.24" fill="#78c98a"/>
<rect x="563.18" y="818.70" width="27.71" height="2.16" fill="#bca8c4"/>
<rect x="595.39" y="825.40" width="27.71" height="104.70" fill="#b15b5a"/>
<rect x="595.39" y="822.16" width="27.71" height="3.24" fill="#78c98a"/>
<rect x="595.39" y="820.00" width="27.71" height="2.16" fill="#bca8c4"/>
<rect x="627.60" y="842.00" width="27.71" height="88.10" fill="#b15b5a"/>
<rect x="627.60" y="840.14" width="27.71" height="1.86" fill="#78c98a"/>
<rect x="627.60" y="838.90" width="27.71" height="1.24" fill="#bca8c4"/>
<rect x="659.80" y="800.40" width="27.71" height="129.70" fill="#b15b5a"/>
<rect x="659.80" y="797.94" width="27.71" height="2.46" fill="#78c98a"/>
<rect x="659.80" y="796.30" width="27.71" height="1.64" fill="#bca8c4"/>
<rect x="692.01" y="832.80" width="27.71" height="97.30" fill="#b15b5a"/>
<rect x="692.01" y="829.68" width="27.71" height="3.12" fill="#78c98a"/>
<rect x="692.01" y="827.60" width="27.71" height="2.08" fill="#bca8c4"/>
<rect x="724.22" y="820.80" width="27.71" height="109.30" fill="#b15b5a"/>
<rect x="724.22" y="818.94" width="27.71" height="1.86" fill="#78c98a"/>
<rect x="724.22" y="817.70" width="27.71" height="1.24" fill="#bca8c4"/>
<rect x="756.42" y="847.00" width="27.71" height="83.10" fill="#b15b5a"/>
<rect x="756.42" y="844.18" width="27.71" height="2.82" fill="#78c98a"/>
<rect x="756.42" y="842.30" width="27.71" height="1.88" fill="#bca8c4"/>
<rect x="788.63" y="833.90" width="27.71" height="96.20" fill="#b15b5a"/>
<rect x="788.63" y="830.78" width="27.71" height="3.12" fill="#78c98a"/>
<rect x="788.63" y="828.70" width="27.71" height="2.08" fill="#bca8c4"/>
<rect x="820.84" y="800.40" width="27.71" height="129.70" fill="#b15b5a"/>
<rect x="820.84" y="798.24" width="27.71" height="2.16" fill="#78c98a"/>
<rect x="820.84" y="796.80" width="27.71" height="1.44" fill="#bca8c4"/>
<rect x="853.04" y="772.70" width="27.71" height="157.40" fill="#b15b5a"/>
<rect x="853.04" y="770.84" width="27.71" height="1.86" fill="#78c98a"/>
<rect x="853.04" y="769.60" width="27.71" height="1.24" fill="#bca8c4"/>
<rect x="885.25" y="836.50" width="27.71" height="93.60" fill="#b15b5a"/>
<rect x="885.25" y="833.08" width="27.71" height="3.42" fill="#78c98a"/>
<rect x="885.25" y="830.80" width="27.71" height="2.28" fill="#bca8c4"/>
<rect x="917.45" y="824.50" width="27.71" height="105.60" fill="#b15b5a"/>
<rect x="917.45" y="821.68" width="27.71" height="2.82" fill="#78c98a"/>
<rect x="917.45" y="819.80" width="27.71" height="1.88" fill="#bca8c4"/>
<rect x="949.66" y="825.50" width="27.71" height="104.60" fill="#b15b5a"/>
<rect x="949.66" y="822.08" width="27.71" height="3.42" fill="#78c98a"/>
<rect x="949.66" y="819.80" width="27.71" height="2.28" fill="#bca8c4"/>
<rect x="981.87" y="845.40" width="27.71" height="84.70" fill="#b15b5a"/>
<rect x="981.87" y="842.58" width="27.71" height="2.82" fill="#78c98a"/>
<rect x="981.87" y="840.70" width="27.71" height="1.88" fill="#bca8c4"/>
<rect x="1014.07" y="831.30" width="27.71" height="98.80" fill="#b15b5a"/>
<rect x="1014.07" y="828.78" width="27.71" height="2.52" fill="#78c98a"/>
<rect x="1014.07" y="827.10" width="27.71" height="1.68" fill="#bca8c4"/>
<rect x="1046.28" y="842.80" width="27.71" height="87.30" fill="#b15b5a"/>
<rect x="1046.28" y="840.28" width="27.71" height="2.52" fill="#78c98a"/>
<rect x="1046.28" y="838.60" width="27.71" height="1.68" fill="#bca8c4"/>
<rect x="1078.49" y="850.10" width="27.71" height="80.00" fill="#b15b5a"/>
<rect x="1078.49" y="848.24" width="27.71" height="1.86" fill="#78c98a"/>
<rect x="1078.49" y="847.00" width="27.71" height="1.24" fill="#bca8c4"/>
<rect x="1110.69" y="831.30" width="27.71" height="98.80" fill="#b15b5a"/>
<path d="M138.5,761.5 H144.5 V930.1 H138.5" fill="none" stroke="#d4d4d4" stroke-width="1"/>
<path d="M138.5,930.1 H144.5" stroke="#d4d4d4" stroke-width="1"/>
<text x="134.6" y="933.7" font-size="10.6" fill="#7d878e" text-anchor="end" >0</text>
<path d="M138.5,906.0142857142857 H144.5" stroke="#d4d4d4" stroke-width="1"/>
<text x="134.6" y="909.6142857142858" font-size="10.6" fill="#7d878e" text-anchor="end" >2,000</text>
<path d="M138.5,881.9285714285714 H144.5" stroke="#d4d4d4" stroke-width="1"/>
<text x="134.6" y="885.5285714285715" font-size="10.6" fill="#7d878e" text-anchor="end" >4,000</text>
<path d="M138.5,857.8428571428572 H144.5" stroke="#d4d4d4" stroke-width="1"/>
<text x="134.6" y="861.4428571428572" font-size="10.6" fill="#7d878e" text-anchor="end" >6,000</text>
<path d="M138.5,833.7571428571429 H144.5" stroke="#d4d4d4" stroke-width="1"/>
<text x="134.6" y="837.3571428571429" font-size="10.6" fill="#7d878e" text-anchor="end" >8,000</text>
<path d="M138.5,809.6714285714286 H144.5" stroke="#d4d4d4" stroke-width="1"/>
<text x="134.6" y="813.2714285714286" font-size="10.6" fill="#7d878e" text-anchor="end" >10,000</text>
<path d="M138.5,785.5857142857143 H144.5" stroke="#d4d4d4" stroke-width="1"/>
<text x="134.6" y="789.1857142857143" font-size="10.6" fill="#7d878e" text-anchor="end" >12,000</text>
<path d="M138.5,761.5 H144.5" stroke="#d4d4d4" stroke-width="1"/>
<text x="134.6" y="765.1" font-size="10.6" fill="#7d878e" text-anchor="end" >14,000</text>
<path d="M144.5,936.1 V930.1 H1142.9 V936.1" fill="none" stroke="#d4d4d4" stroke-width="1"/>
<path d="M208.91290322580647,930.1 V936.1" stroke="#d4d4d4" stroke-width="1"/>
<text x="208.91290322580647" y="946.5" font-size="10.6" fill="#7d878e" text-anchor="middle" >11:42:00</text>
<path d="M273.32580645161295,930.1 V936.1" stroke="#d4d4d4" stroke-width="1"/>
<text x="273.32580645161295" y="946.5" font-size="10.6" fill="#7d878e" text-anchor="middle" >11:43:00</text>
<path d="M337.73870967741937,930.1 V936.1" stroke="#d4d4d4" stroke-width="1"/>
<text x="337.73870967741937" y="946.5" font-size="10.6" fill="#7d878e" text-anchor="middle" >11:44:00</text>
<path d="M402.15161290322584,930.1 V936.1" stroke="#d4d4d4" stroke-width="1"/>
<text x="402.15161290322584" y="946.5" font-size="10.6" fill="#7d878e" text-anchor="middle" >11:45:00</text>
<path d="M466.5645161290323,930.1 V936.1" stroke="#d4d4d4" stroke-width="1"/>
<text x="466.5645161290323" y="946.5" font-size="10.6" fill="#7d878e" text-anchor="middle" >11:46:00</text>
<path d="M530.9774193548387,930.1 V936.1" stroke="#d4d4d4" stroke-width="1"/>
<text x="530.9774193548387" y="946.5" font-size="10.6" fill="#7d878e" text-anchor="middle" >11:47:00</text>
<path d="M595.3903225806453,930.1 V936.1" stroke="#d4d4d4" stroke-width="1"/>
<text x="595.3903225806453" y="946.5" font-size="10.6" fill="#7d878e" text-anchor="middle" >11:48:00</text>
<path d="M659.8032258064517,930.1 V936.1" stroke="#d4d4d4" stroke-width="1"/>
<text x="659.8032258064517" y="946.5" font-size="10.6" fill="#7d878e" text-anchor="middle" >11:49:00</text>
<path d="M724.2161290322581,930.1 V936.1" stroke="#d4d4d4" stroke-width="1"/>
<text x="724.2161290322581" y="946.5" font-size="10.6" fill="#7d878e" text-anchor="middle" >11:50:00</text>
<path d="M788.6290322580646,930.1 V936.1" stroke="#d4d4d4" stroke-width="1"/>
<text x="788.6290322580646" y="946.5" font-size="10.6" fill="#7d878e" text-anchor="middle" >11:51:00</text>
<path d="M853.041935483871,930.1 V936.1" stroke="#d4d4d4" stroke-width="1"/>
<text x="853.041935483871" y="946.5" font-size="10.6" fill="#7d878e" text-anchor="middle" >11:52:00</text>
<path d="M917.4548387096775,930.1 V936.1" stroke="#d4d4d4" stroke-width="1"/>
<text x="917.4548387096775" y="946.5" font-size="10.6" fill="#7d878e" text-anchor="middle" >11:53:00</text>
<path d="M981.867741935484,930.1 V936.1" stroke="#d4d4d4" stroke-width="1"/>
<text x="981.867741935484" y="946.5" font-size="10.6" fill="#7d878e" text-anchor="middle" >11:54:00</text>
<path d="M1046.2806451612905,930.1 V936.1" stroke="#d4d4d4" stroke-width="1"/>
<text x="1046.2806451612905" y="946.5" font-size="10.6" fill="#7d878e" text-anchor="middle" >11:55:00</text>
<path d="M1110.693548387097,930.1 V936.1" stroke="#d4d4d4" stroke-width="1"/>
<text x="1110.693548387097" y="946.5" font-size="10.6" fill="#7d878e" text-anchor="middle" >11:56:00</text>
<text x="91.5" y="846.5" font-size="12.4" font-weight="bold" fill="#737e85" text-anchor="middle" transform="rotate(-90 91.5 846.5)">Count</text>
<text x="643" y="969.6" font-size="12.35" fill="#737e85" text-anchor="middle" font-weight="bold" >@timestamp per 30 seconds</text>
<circle cx="1154.9" cy="769" r="6.7" fill="#b3b3b3"/><path d="M1153.3000000000002,765.8 L1156.7,769 L1153.3000000000002,772.2" fill="none" stroke="#fff" stroke-width="1.8"/>
<circle cx="1174.2" cy="766.5" r="5" fill="#9e3533"/>
<text x="1182.6" y="770.7" font-size="12.4" fill="#3a3a3a" text-anchor="start" >0</text>
<circle cx="1174.2" cy="785.6" r="5" fill="#daa05d"/>
<text x="1182.6" y="789.8000000000001" font-size="12.4" fill="#3a3a3a" text-anchor="start" >2,000</text>
<circle cx="1174.2" cy="804.7" r="5" fill="#bfae3b"/>
<text x="1182.6" y="808.9000000000001" font-size="12.4" fill="#3a3a3a" text-anchor="start" >4,000</text>
<circle cx="1174.2" cy="823.8" r="5" fill="#3b4fc4"/>
<text x="1182.6" y="828.0" font-size="12.4" fill="#3a3a3a" text-anchor="start" >6,000</text>
<circle cx="1174.2" cy="842.9" r="5" fill="#c74a3c"/>
<text x="1182.6" y="847.1" font-size="12.4" fill="#3a3a3a" text-anchor="start" >8,000</text>
<circle cx="1174.2" cy="862.0" r="5" fill="#34aebd"/>
<text x="1182.6" y="866.2" font-size="12.4" fill="#3a3a3a" text-anchor="start" >32,000</text>
<circle cx="1174.2" cy="881.1" r="5" fill="#6cc13f"/>
<text x="1182.6" y="885.3000000000001" font-size="12.4" fill="#3a3a3a" text-anchor="start" >34,000</text>
<circle cx="1174.2" cy="900.2" r="5" fill="#8a3ac7"/>
<text x="1182.6" y="904.4000000000001" font-size="12.4" fill="#3a3a3a" text-anchor="start" >44,000</text>
<circle cx="1174.2" cy="919.3" r="5" fill="#ce45b7"/>
<text x="1182.6" y="923.5" font-size="12.4" fill="#3a3a3a" text-anchor="start" >46,000</text>
<circle cx="1174.2" cy="938.4" r="5" fill="#3cc45a"/>
<text x="1182.6" y="942.6" font-size="12.4" fill="#3a3a3a" text-anchor="start" >-2,000</text>
<circle cx="1174.2" cy="957.5" r="5" fill="#bb9236"/>
<text x="1182.6" y="961.7" font-size="12.4" fill="#3a3a3a" text-anchor="start" >10,000</text>
<circle cx="1174.2" cy="976.6" r="5" fill="#3e65c9"/>
<text x="1182.6" y="980.8000000000001" font-size="12.4" fill="#3a3a3a" text-anchor="start" >12,000</text>
<rect x="1301.5" y="757" width="14" height="226" fill="#fafafa"/><path d="M1301.5,757 V983 M1315.5,757 V983" stroke="#e8e8e8" stroke-width="1"/>
<rect x="1305" y="758" width="7" height="33" rx="3.5" fill="#c1c1c1"/>
<rect x="491" y="1061.5" width="7.5" height="168.9000000000001" fill="#efefef"/>
<path d="M144.60,1229.50 C146.42,1229.50 151.78,1229.50 155.50,1229.50 C159.22,1229.50 163.10,1229.50 166.90,1229.50 C170.70,1229.50 174.48,1229.50 178.30,1229.50 C182.12,1229.50 186.00,1229.50 189.80,1229.50 C193.60,1229.50 197.32,1229.50 201.10,1229.50 C204.88,1229.50 208.67,1229.50 212.50,1229.50 C216.33,1229.50 220.27,1229.50 224.10,1229.50 C227.93,1229.50 231.70,1229.50 235.50,1229.50 C239.30,1229.50 243.10,1229.50 246.90,1229.50 C250.70,1229.50 254.47,1229.50 258.30,1229.50 C262.13,1229.50 266.07,1229.50 269.90,1229.50 C273.73,1229.50 277.48,1229.50 281.30,1229.50 C285.12,1229.50 288.97,1229.50 292.80,1229.50 C296.63,1229.50 300.50,1229.50 304.30,1229.50 C308.10,1229.50 311.77,1229.50 315.60,1229.50 C319.43,1229.50 323.42,1229.50 327.30,1229.50 C331.18,1229.50 335.12,1229.50 338.90,1229.50 C342.68,1229.50 346.22,1229.50 350.00,1229.50 C353.78,1229.50 357.72,1229.50 361.60,1229.50 C365.48,1229.50 369.43,1229.50 373.30,1229.50 C377.17,1229.50 381.02,1229.50 384.80,1229.50 C388.58,1229.50 392.23,1229.92 396.00,1229.50 C399.77,1229.08 403.58,1227.00 407.40,1227.00 C411.22,1227.00 415.08,1229.45 418.90,1229.50 C422.72,1229.55 426.47,1227.63 430.30,1227.30 C434.13,1226.97 438.07,1227.13 441.90,1227.50 C445.73,1227.87 449.47,1229.17 453.30,1229.50 C457.13,1229.83 461.07,1229.50 464.90,1229.50 C468.73,1229.50 472.47,1229.50 476.30,1229.50 C480.13,1229.50 485.97,1229.50 487.90,1229.50" fill="none" stroke="#8da0e0" stroke-width="1.6"/>
<rect x="142.80" y="1228.60" width="3.6" height="1.8" fill="#6f87d8"/>
<rect x="153.70" y="1228.60" width="3.6" height="1.8" fill="#6f87d8"/>
<rect x="165.10" y="1228.60" width="3.6" height="1.8" fill="#6f87d8"/>
<rect x="176.50" y="1228.60" width="3.6" height="1.8" fill="#6f87d8"/>
<rect x="188.00" y="1228.60" width="3.6" height="1.8" fill="#6f87d8"/>
<rect x="199.30" y="1228.60" width="3.6" height="1.8" fill="#6f87d8"/>
<rect x="210.70" y="1228.60" width="3.6" height="1.8" fill="#6f87d8"/>
<rect x="222.30" y="1228.60" width="3.6" height="1.8" fill="#6f87d8"/>
<rect x="233.70" y="1228.60" width="3.6" height="1.8" fill="#6f87d8"/>
<rect x="245.10" y="1228.60" width="3.6" height="1.8" fill="#6f87d8"/>
<rect x="256.50" y="1228.60" width="3.6" height="1.8" fill="#6f87d8"/>
<rect x="268.10" y="1228.60" width="3.6" height="1.8" fill="#6f87d8"/>
<rect x="279.50" y="1228.60" width="3.6" height="1.8" fill="#6f87d8"/>
<rect x="291.00" y="1228.60" width="3.6" height="1.8" fill="#6f87d8"/>
<rect x="302.50" y="1228.60" width="3.6" height="1.8" fill="#6f87d8"/>
<rect x="313.80" y="1228.60" width="3.6" height="1.8" fill="#6f87d8"/>
<rect x="325.50" y="1228.60" width="3.6" height="1.8" fill="#6f87d8"/>
<rect x="337.10" y="1228.60" width="3.6" height="1.8" fill="#6f87d8"/>
<rect x="348.20" y="1228.60" width="3.6" height="1.8" fill="#6f87d8"/>
<rect x="359.80" y="1228.60" width="3.6" height="1.8" fill="#6f87d8"/>
<rect x="371.50" y="1228.60" width="3.6" height="1.8" fill="#6f87d8"/>
<rect x="383.00" y="1228.60" width="3.6" height="1.8" fill="#6f87d8"/>
<rect x="394.20" y="1228.60" width="3.6" height="1.8" fill="#6f87d8"/>
<rect x="405.60" y="1226.10" width="3.6" height="1.8" fill="#6f87d8"/>
<rect x="417.10" y="1228.60" width="3.6" height="1.8" fill="#6f87d8"/>
<rect x="428.50" y="1226.40" width="3.6" height="1.8" fill="#6f87d8"/>
<rect x="440.10" y="1226.60" width="3.6" height="1.8" fill="#6f87d8"/>
<rect x="451.50" y="1228.60" width="3.6" height="1.8" fill="#6f87d8"/>
<rect x="463.10" y="1228.60" width="3.6" height="1.8" fill="#6f87d8"/>
<rect x="474.50" y="1228.60" width="3.6" height="1.8" fill="#6f87d8"/>
<rect x="486.10" y="1228.60" width="3.6" height="1.8" fill="#6f87d8"/>
<path d="M144.60,1176.70 C146.42,1174.40 151.78,1172.60 155.50,1162.90 C159.22,1153.20 163.10,1124.97 166.90,1118.50 C170.70,1112.03 174.48,1124.52 178.30,1124.10 C182.12,1123.68 186.00,1119.40 189.80,1116.00 C193.60,1112.60 197.32,1108.85 201.10,1103.70 C204.88,1098.55 208.67,1086.57 212.50,1085.10 C216.33,1083.63 220.27,1094.50 224.10,1094.90 C227.93,1095.30 231.70,1084.12 235.50,1087.50 C239.30,1090.88 243.10,1119.15 246.90,1115.20 C250.70,1111.25 254.47,1070.47 258.30,1063.80 C262.13,1057.13 266.07,1068.98 269.90,1075.20 C273.73,1081.42 277.48,1092.45 281.30,1101.10 C285.12,1109.75 288.97,1123.02 292.80,1127.10 C296.63,1131.18 300.50,1123.63 304.30,1125.60 C308.10,1127.57 311.77,1147.75 315.60,1138.90 C319.43,1130.05 323.42,1083.57 327.30,1072.50 C331.18,1061.43 335.12,1056.37 338.90,1072.50 C342.68,1088.63 346.22,1152.55 350.00,1169.30 C353.78,1186.05 357.72,1179.42 361.60,1173.00 C365.48,1166.58 369.43,1134.87 373.30,1130.80 C377.17,1126.73 381.02,1143.83 384.80,1148.60 C388.58,1153.37 392.23,1158.67 396.00,1159.40 C399.77,1160.13 403.58,1154.93 407.40,1153.00 C411.22,1151.07 415.08,1151.87 418.90,1147.80 C422.72,1143.73 426.47,1128.15 430.30,1128.60 C434.13,1129.05 438.07,1137.53 441.90,1150.50 C445.73,1163.47 449.47,1194.20 453.30,1206.40 C457.13,1218.60 461.07,1223.95 464.90,1223.70 C468.73,1223.45 472.47,1209.27 476.30,1204.90 C480.13,1200.53 485.97,1198.73 487.90,1197.50" fill="none" stroke="#663db8" stroke-width="2.2"/>
<circle cx="144.6" cy="1176.7" r="1.9" fill="#663db8"/>
<circle cx="155.5" cy="1162.9" r="1.9" fill="#663db8"/>
<circle cx="166.9" cy="1118.5" r="1.9" fill="#663db8"/>
<circle cx="178.3" cy="1124.1" r="1.9" fill="#663db8"/>
<circle cx="189.8" cy="1116" r="1.9" fill="#663db8"/>
<circle cx="201.1" cy="1103.7" r="1.9" fill="#663db8"/>
<circle cx="212.5" cy="1085.1" r="1.9" fill="#663db8"/>
<circle cx="224.1" cy="1094.9" r="1.9" fill="#663db8"/>
<circle cx="235.5" cy="1087.5" r="1.9" fill="#663db8"/>
<circle cx="246.9" cy="1115.2" r="1.9" fill="#663db8"/>
<circle cx="258.3" cy="1063.8" r="1.9" fill="#663db8"/>
<circle cx="269.9" cy="1075.2" r="1.9" fill="#663db8"/>
<circle cx="281.3" cy="1101.1" r="1.9" fill="#663db8"/>
<circle cx="292.8" cy="1127.1" r="1.9" fill="#663db8"/>
<circle cx="304.3" cy="1125.6" r="1.9" fill="#663db8"/>
<circle cx="315.6" cy="1138.9" r="1.9" fill="#663db8"/>
<circle cx="327.3" cy="1072.5" r="1.9" fill="#663db8"/>
<circle cx="338.9" cy="1072.5" r="1.9" fill="#663db8"/>
<circle cx="350" cy="1169.3" r="1.9" fill="#663db8"/>
<circle cx="361.6" cy="1173" r="1.9" fill="#663db8"/>
<circle cx="373.3" cy="1130.8" r="1.9" fill="#663db8"/>
<circle cx="384.8" cy="1148.6" r="1.9" fill="#663db8"/>
<circle cx="396" cy="1159.4" r="1.9" fill="#663db8"/>
<circle cx="407.4" cy="1153" r="1.9" fill="#663db8"/>
<circle cx="418.9" cy="1147.8" r="1.9" fill="#663db8"/>
<circle cx="430.3" cy="1128.6" r="1.9" fill="#663db8"/>
<circle cx="441.9" cy="1150.5" r="1.9" fill="#663db8"/>
<circle cx="453.3" cy="1206.4" r="1.9" fill="#663db8"/>
<circle cx="464.9" cy="1223.7" r="1.9" fill="#663db8"/>
<circle cx="476.3" cy="1204.9" r="1.9" fill="#663db8"/>
<circle cx="487.9" cy="1197.5" r="1.9" fill="#663db8"/>
<path d="M138.6,1061.5 H144.6 V1230.4 H138.6" fill="none" stroke="#d4d4d4" stroke-width="1"/>
<path d="M138.6,1230.4 H144.6" stroke="#d4d4d4" stroke-width="1"/>
<text x="134.4" y="1234.0" font-size="10.6" fill="#7d878e" text-anchor="end" >0</text>
<path d="M138.6,1182.3500000000001 H144.6" stroke="#d4d4d4" stroke-width="1"/>
<text x="134.4" y="1185.95" font-size="10.6" fill="#7d878e" text-anchor="end" >20,000</text>
<path d="M138.6,1134.3000000000002 H144.6" stroke="#d4d4d4" stroke-width="1"/>
<text x="134.4" y="1137.9" font-size="10.6" fill="#7d878e" text-anchor="end" >40,000</text>
<path d="M138.6,1086.25 H144.6" stroke="#d4d4d4" stroke-width="1"/>
<text x="134.4" y="1089.85" font-size="10.6" fill="#7d878e" text-anchor="end" >60,000</text>
<path d="M144.6,1236.4 V1230.4 H498.5 V1236.4" fill="none" stroke="#d4d4d4" stroke-width="1"/>
<path d="M201.75,1230.4 V1236.4" stroke="#d4d4d4" stroke-width="1"/>
<text x="201.75" y="1246.9" font-size="10.6" fill="#7d878e" text-anchor="middle" >11:45:00</text>
<path d="M316.05,1230.4 V1236.4" stroke="#d4d4d4" stroke-width="1"/>
<text x="316.05" y="1246.9" font-size="10.6" fill="#7d878e" text-anchor="middle" >11:50:00</text>
<path d="M430.35,1230.4 V1236.4" stroke="#d4d4d4" stroke-width="1"/>
<text x="430.35" y="1246.9" font-size="10.6" fill="#7d878e" text-anchor="middle" >11:55:00</text>
<text x="91.5" y="1146.1" font-size="12.4" font-weight="bold" fill="#737e85" text-anchor="middle" transform="rotate(-90 91.5 1146.1)">Count</text>
<text x="321.6" y="1270" font-size="12.35" fill="#737e85" text-anchor="middle" font-weight="bold" >@timestamp per 30 seconds</text>
<circle cx="511.1" cy="1069.1" r="6.7" fill="#b3b3b3"/><path d="M509.5,1065.8999999999999 L512.9,1069.1 L509.5,1072.3" fill="none" stroke="#fff" stroke-width="1.8"/>
<circle cx="529.9" cy="1066.8" r="5" fill="#57c17b"/>
<text x="539.3" y="1071.0" font-size="12.4" fill="#3a3a3a" text-anchor="start" >75th percentile of res...</text>
<circle cx="529.9" cy="1085.6" r="5" fill="#6f87d8"/>
<text x="539.3" y="1089.8" font-size="12.4" fill="#3a3a3a" text-anchor="start" >95th percentile of res...</text>
<circle cx="529.9" cy="1104.7" r="5" fill="#663db8"/>
<text x="539.3" y="1108.9" font-size="12.4" fill="#3a3a3a" text-anchor="start" >99th percentile of res...</text>
<rect x="782.00" y="1062" width="9.61" height="30.20" fill="#cd62a3"/>
<rect x="782.00" y="1092.20" width="9.61" height="137.30" fill="#8265d0"/>
<rect x="793.61" y="1062" width="9.61" height="30.70" fill="#cd62a3"/>
<rect x="793.61" y="1092.70" width="9.61" height="136.80" fill="#8265d0"/>
<rect x="805.23" y="1062" width="9.61" height="31.70" fill="#cd62a3"/>
<rect x="805.23" y="1093.70" width="9.61" height="135.80" fill="#8265d0"/>
<rect x="816.84" y="1062" width="9.61" height="27.80" fill="#cd62a3"/>
<rect x="816.84" y="1089.80" width="9.61" height="139.70" fill="#8265d0"/>
<rect x="828.45" y="1062" width="9.61" height="26.90" fill="#cd62a3"/>
<rect x="828.45" y="1088.90" width="9.61" height="140.60" fill="#8265d0"/>
<rect x="840.06" y="1062" width="9.61" height="31.70" fill="#cd62a3"/>
<rect x="840.06" y="1093.70" width="9.61" height="135.80" fill="#8265d0"/>
<rect x="851.68" y="1062" width="9.61" height="28.80" fill="#cd62a3"/>
<rect x="851.68" y="1090.80" width="9.61" height="138.70" fill="#8265d0"/>
<rect x="863.29" y="1062" width="9.61" height="28.80" fill="#cd62a3"/>
<rect x="863.29" y="1090.80" width="9.61" height="138.70" fill="#8265d0"/>
<rect x="874.90" y="1062" width="9.61" height="27.80" fill="#cd62a3"/>
<rect x="874.90" y="1089.80" width="9.61" height="139.70" fill="#8265d0"/>
<rect x="886.52" y="1062" width="9.61" height="34.00" fill="#cd62a3"/>
<rect x="886.52" y="1096.00" width="9.61" height="133.50" fill="#8265d0"/>
<rect x="898.13" y="1062" width="9.61" height="31.70" fill="#cd62a3"/>
<rect x="898.13" y="1093.70" width="9.61" height="135.80" fill="#8265d0"/>
<rect x="909.74" y="1062" width="9.61" height="31.70" fill="#cd62a3"/>
<rect x="909.74" y="1093.70" width="9.61" height="135.80" fill="#8265d0"/>
<rect x="921.35" y="1062" width="9.61" height="31.70" fill="#cd62a3"/>
<rect x="921.35" y="1093.70" width="9.61" height="135.80" fill="#8265d0"/>
<rect x="932.97" y="1062" width="9.61" height="30.20" fill="#cd62a3"/>
<rect x="932.97" y="1092.20" width="9.61" height="137.30" fill="#8265d0"/>
<rect x="944.58" y="1062" width="9.61" height="28.80" fill="#cd62a3"/>
<rect x="944.58" y="1090.80" width="9.61" height="138.70" fill="#8265d0"/>
<rect x="956.19" y="1062" width="9.61" height="33.10" fill="#cd62a3"/>
<rect x="956.19" y="1095.10" width="9.61" height="134.40" fill="#8265d0"/>
<rect x="967.81" y="1062" width="9.61" height="25.40" fill="#cd62a3"/>
<rect x="967.81" y="1087.40" width="9.61" height="142.10" fill="#8265d0"/>
<rect x="979.42" y="1062" width="9.61" height="31.70" fill="#cd62a3"/>
<rect x="979.42" y="1093.70" width="9.61" height="135.80" fill="#8265d0"/>
<rect x="991.03" y="1062" width="9.61" height="30.70" fill="#cd62a3"/>
<rect x="991.03" y="1092.70" width="9.61" height="136.80" fill="#8265d0"/>
<rect x="1002.65" y="1062" width="9.61" height="35.00" fill="#cd62a3"/>
<rect x="1002.65" y="1097.00" width="9.61" height="132.50" fill="#8265d0"/>
<rect x="1014.26" y="1062" width="9.61" height="31.70" fill="#cd62a3"/>
<rect x="1014.26" y="1093.70" width="9.61" height="135.80" fill="#8265d0"/>
<rect x="1025.87" y="1062" width="9.61" height="24.50" fill="#cd62a3"/>
<rect x="1025.87" y="1086.50" width="9.61" height="143.00" fill="#8265d0"/>
<rect x="1037.48" y="1062" width="9.61" height="20.20" fill="#cd62a3"/>
<rect x="1037.48" y="1082.20" width="9.61" height="147.30" fill="#8265d0"/>
<rect x="1049.10" y="1062" width="9.61" height="32.60" fill="#cd62a3"/>
<rect x="1049.10" y="1094.60" width="9.61" height="134.90" fill="#8265d0"/>
<rect x="1060.71" y="1062" width="9.61" height="29.30" fill="#cd62a3"/>
<rect x="1060.71" y="1091.30" width="9.61" height="138.20" fill="#8265d0"/>
<rect x="1072.32" y="1062" width="9.61" height="30.70" fill="#cd62a3"/>
<rect x="1072.32" y="1092.70" width="9.61" height="136.80" fill="#8265d0"/>
<rect x="1083.94" y="1062" width="9.61" height="35.50" fill="#cd62a3"/>
<rect x="1083.94" y="1097.50" width="9.61" height="132.00" fill="#8265d0"/>
<rect x="1095.55" y="1062" width="9.61" height="29.30" fill="#cd62a3"/>
<rect x="1095.55" y="1091.30" width="9.61" height="138.20" fill="#8265d0"/>
<rect x="1107.16" y="1062" width="9.61" height="35.50" fill="#cd62a3"/>
<rect x="1107.16" y="1097.50" width="9.61" height="132.00" fill="#8265d0"/>
<rect x="1118.77" y="1062" width="9.61" height="36.40" fill="#cd62a3"/>
<rect x="1118.77" y="1098.40" width="9.61" height="131.10" fill="#8265d0"/>
<rect x="1130.39" y="1062" width="9.61" height="14.40" fill="#cd62a3"/>
<rect x="1130.39" y="1076.40" width="9.61" height="153.10" fill="#8265d0"/>
<path d="M776,1062 H782 V1229.5 H776" fill="none" stroke="#d4d4d4" stroke-width="1"/>
<path d="M776,1229.5 H782" stroke="#d4d4d4" stroke-width="1"/>
<text x="772.7" y="1233.1" font-size="10.6" fill="#7d878e" text-anchor="end" >0%</text>
<path d="M776,1196.0 H782" stroke="#d4d4d4" stroke-width="1"/>
<text x="772.7" y="1199.6" font-size="10.6" fill="#7d878e" text-anchor="end" >20%</text>
<path d="M776,1162.5 H782" stroke="#d4d4d4" stroke-width="1"/>
<text x="772.7" y="1166.1" font-size="10.6" fill="#7d878e" text-anchor="end" >40%</text>
<path d="M776,1129.0 H782" stroke="#d4d4d4" stroke-width="1"/>
<text x="772.7" y="1132.6" font-size="10.6" fill="#7d878e" text-anchor="end" >60%</text>
<path d="M776,1095.5 H782" stroke="#d4d4d4" stroke-width="1"/>
<text x="772.7" y="1099.1" font-size="10.6" fill="#7d878e" text-anchor="end" >80%</text>
<path d="M776,1062.0 H782" stroke="#d4d4d4" stroke-width="1"/>
<text x="772.7" y="1065.6" font-size="10.6" fill="#7d878e" text-anchor="end" >100%</text>
<path d="M782,1235.5 V1229.5 H1142 V1235.5" fill="none" stroke="#d4d4d4" stroke-width="1"/>
<path d="M874.9032258064516,1229.5 V1235.5" stroke="#d4d4d4" stroke-width="1"/>
<text x="874.9032258064516" y="1246.0" font-size="10.6" fill="#7d878e" text-anchor="middle" >11:45:00</text>
<path d="M991.0322580645161,1229.5 V1235.5" stroke="#d4d4d4" stroke-width="1"/>
<text x="991.0322580645161" y="1246.0" font-size="10.6" fill="#7d878e" text-anchor="middle" >11:50:00</text>
<path d="M1107.1612903225807,1229.5 V1235.5" stroke="#d4d4d4" stroke-width="1"/>
<text x="1107.1612903225807" y="1246.0" font-size="10.6" fill="#7d878e" text-anchor="middle" >11:55:00</text>
<text x="736.1" y="1146" font-size="12.4" font-weight="bold" fill="#737e85" text-anchor="middle" transform="rotate(-90 736.1 1146)">Count</text>
<text x="963" y="1270" font-size="12.35" fill="#737e85" text-anchor="middle" font-weight="bold" >Percentage of @timestamp per 30 seconds</text>
<circle cx="1154" cy="1068.8" r="6.7" fill="#b3b3b3"/><path d="M1152.4,1065.6 L1155.8,1068.8 L1152.4,1072.0" fill="none" stroke="#fff" stroke-width="1.8"/>
<circle cx="1174.2" cy="1066.8" r="5" fill="#663db8"/>
<text x="1182.6" y="1071.0" font-size="12.4" fill="#3a3a3a" text-anchor="start" >OK</text>
<circle cx="1174.2" cy="1085.5" r="5" fill="#c94b9c"/>
<text x="1182.6" y="1089.7" font-size="12.4" fill="#3a3a3a" text-anchor="start" >Error</text>
</svg>
</body></html>
